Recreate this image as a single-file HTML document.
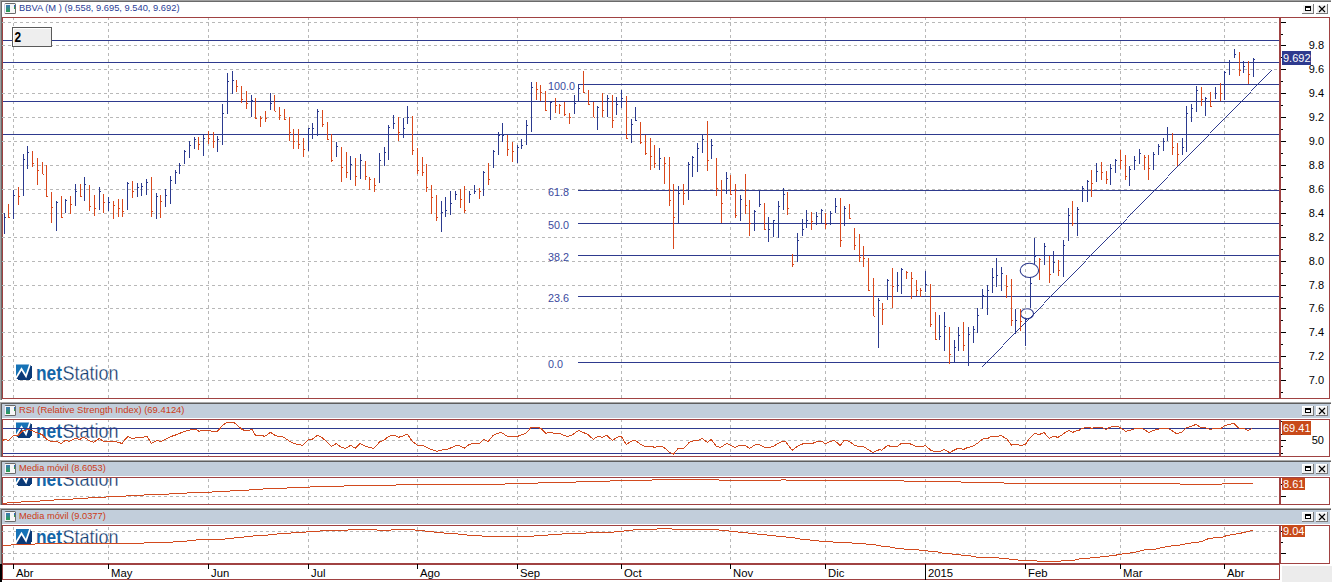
<!DOCTYPE html>
<html><head><meta charset="utf-8"><style>
html,body{margin:0;padding:0;background:#fff;width:1332px;height:582px;overflow:hidden}
svg{display:block;font-family:"Liberation Sans",sans-serif}
</style></head><body>
<svg width="1332" height="582" viewBox="0 0 1332 582" shape-rendering="crispEdges">
<defs>
<linearGradient id="ig" x1="0" y1="0" x2="0" y2="1"><stop offset="0" stop-color="#3a78b8"/><stop offset="1" stop-color="#2aa050"/></linearGradient>
<linearGradient id="lg" x1="0" y1="0" x2="0.6" y2="1"><stop offset="0" stop-color="#1a78c0"/><stop offset="0.55" stop-color="#0c4c8c"/><stop offset="1" stop-color="#0a2e68"/></linearGradient>
</defs>
<rect x="0" y="0" width="1332" height="582" fill="#ffffff" />
<rect x="0" y="0" width="1331" height="1" fill="#a0a0a0" />
<rect x="0" y="1" width="1331" height="1" fill="#6a6a6a" />
<rect x="0" y="0" width="1" height="400" fill="#a0a0a0" />
<rect x="1" y="1" width="1" height="399" fill="#6a6a6a" />
<rect x="4.5" y="3" width="11.5" height="11" fill="#6a6a6a" rx="1.5" shape-rendering="geometricPrecision"/>
<rect x="5" y="4" width="10" height="9" fill="#f6f6f6" />
<rect x="4" y="4" width="1" height="9" fill="#c8c8dc" />
<rect x="6" y="5" width="4" height="7" fill="url(#ig)"/>
<rect x="14" y="5" width="1" height="3" fill="#2a6ac0" />
<rect x="14" y="7" width="1" height="2" fill="#30a050" />
<text x="19" y="11.1" font-size="9.3" fill="#2a3c96" text-anchor="start" font-weight="normal" textLength="160.5" lengthAdjust="spacingAndGlyphs">BBVA (M ) (9.558, 9.695, 9.540, 9.692)</text>
<rect x="1302" y="4" width="12" height="10" fill="#7a7a7a" />
<rect x="1302" y="4" width="11" height="9" fill="#ffffff" />
<rect x="1303" y="5" width="10" height="8" fill="#f0f0f0" />
<rect x="1305" y="6" width="6" height="5" fill="#000" />
<rect x="1306" y="8" width="4" height="2" fill="#fff" />
<rect x="1316" y="4" width="12" height="10" fill="#7a7a7a" />
<rect x="1316" y="4" width="11" height="9" fill="#ffffff" />
<rect x="1317" y="5" width="10" height="8" fill="#f0f0f0" />
<path d="M1319 6L1325 12M1325 6L1319 12" stroke="#000" stroke-width="1.15" shape-rendering="geometricPrecision"/>
<rect x="2" y="17" width="1328" height="1" fill="#a04242" />
<rect x="2" y="398" width="1328" height="1" fill="#a04242" />
<rect x="2" y="17" width="1" height="382" fill="#a04242" />
<rect x="1329" y="17" width="1" height="382" fill="#a04242" />
<rect x="1279" y="17" width="2" height="382" fill="#a04242" />
<path d="M2 22h3M8 22h3M14 22h3M20 22h3M26 22h3M32 22h3M38 22h3M44 22h3M50 22h3M56 22h3M62 22h3M68 22h3M74 22h3M80 22h3M86 22h3M92 22h3M98 22h3M104 22h3M110 22h3M116 22h3M122 22h3M128 22h3M134 22h3M140 22h3M146 22h3M152 22h3M158 22h3M164 22h3M170 22h3M176 22h3M182 22h3M188 22h3M194 22h3M200 22h3M206 22h3M212 22h3M218 22h3M224 22h3M230 22h3M236 22h3M242 22h3M248 22h3M254 22h3M260 22h3M266 22h3M272 22h3M278 22h3M284 22h3M290 22h3M296 22h3M302 22h3M308 22h3M314 22h3M320 22h3M326 22h3M332 22h3M338 22h3M344 22h3M350 22h3M356 22h3M362 22h3M368 22h3M374 22h3M380 22h3M386 22h3M392 22h3M398 22h3M404 22h3M410 22h3M416 22h3M422 22h3M428 22h3M434 22h3M440 22h3M446 22h3M452 22h3M458 22h3M464 22h3M470 22h3M476 22h3M482 22h3M488 22h3M494 22h3M500 22h3M506 22h3M512 22h3M518 22h3M524 22h3M530 22h3M536 22h3M542 22h3M548 22h3M554 22h3M560 22h3M566 22h3M572 22h3M578 22h3M584 22h3M590 22h3M596 22h3M602 22h3M608 22h3M614 22h3M620 22h3M626 22h3M632 22h3M638 22h3M644 22h3M650 22h3M656 22h3M662 22h3M668 22h3M674 22h3M680 22h3M686 22h3M692 22h3M698 22h3M704 22h3M710 22h3M716 22h3M722 22h3M728 22h3M734 22h3M740 22h3M746 22h3M752 22h3M758 22h3M764 22h3M770 22h3M776 22h3M782 22h3M788 22h3M794 22h3M800 22h3M806 22h3M812 22h3M818 22h3M824 22h3M830 22h3M836 22h3M842 22h3M848 22h3M854 22h3M860 22h3M866 22h3M872 22h3M878 22h3M884 22h3M890 22h3M896 22h3M902 22h3M908 22h3M914 22h3M920 22h3M926 22h3M932 22h3M938 22h3M944 22h3M950 22h3M956 22h3M962 22h3M968 22h3M974 22h3M980 22h3M986 22h3M992 22h3M998 22h3M1004 22h3M1010 22h3M1016 22h3M1022 22h3M1028 22h3M1034 22h3M1040 22h3M1046 22h3M1052 22h3M1058 22h3M1064 22h3M1070 22h3M1076 22h3M1082 22h3M1088 22h3M1094 22h3M1100 22h3M1106 22h3M1112 22h3M1118 22h3M1124 22h3M1130 22h3M1136 22h3M1142 22h3M1148 22h3M1154 22h3M1160 22h3M1166 22h3M1172 22h3M1178 22h3M1184 22h3M1190 22h3M1196 22h3M1202 22h3M1208 22h3M1214 22h3M1220 22h3M1226 22h3M1232 22h3M1238 22h3M1244 22h3M1250 22h3M1256 22h3M1262 22h3M1268 22h3M1274 22h3" stroke="#b8b8b8" stroke-width="1" transform="translate(0,0.5)"/>
<path d="M2 45h3M8 45h3M14 45h3M20 45h3M26 45h3M32 45h3M38 45h3M44 45h3M50 45h3M56 45h3M62 45h3M68 45h3M74 45h3M80 45h3M86 45h3M92 45h3M98 45h3M104 45h3M110 45h3M116 45h3M122 45h3M128 45h3M134 45h3M140 45h3M146 45h3M152 45h3M158 45h3M164 45h3M170 45h3M176 45h3M182 45h3M188 45h3M194 45h3M200 45h3M206 45h3M212 45h3M218 45h3M224 45h3M230 45h3M236 45h3M242 45h3M248 45h3M254 45h3M260 45h3M266 45h3M272 45h3M278 45h3M284 45h3M290 45h3M296 45h3M302 45h3M308 45h3M314 45h3M320 45h3M326 45h3M332 45h3M338 45h3M344 45h3M350 45h3M356 45h3M362 45h3M368 45h3M374 45h3M380 45h3M386 45h3M392 45h3M398 45h3M404 45h3M410 45h3M416 45h3M422 45h3M428 45h3M434 45h3M440 45h3M446 45h3M452 45h3M458 45h3M464 45h3M470 45h3M476 45h3M482 45h3M488 45h3M494 45h3M500 45h3M506 45h3M512 45h3M518 45h3M524 45h3M530 45h3M536 45h3M542 45h3M548 45h3M554 45h3M560 45h3M566 45h3M572 45h3M578 45h3M584 45h3M590 45h3M596 45h3M602 45h3M608 45h3M614 45h3M620 45h3M626 45h3M632 45h3M638 45h3M644 45h3M650 45h3M656 45h3M662 45h3M668 45h3M674 45h3M680 45h3M686 45h3M692 45h3M698 45h3M704 45h3M710 45h3M716 45h3M722 45h3M728 45h3M734 45h3M740 45h3M746 45h3M752 45h3M758 45h3M764 45h3M770 45h3M776 45h3M782 45h3M788 45h3M794 45h3M800 45h3M806 45h3M812 45h3M818 45h3M824 45h3M830 45h3M836 45h3M842 45h3M848 45h3M854 45h3M860 45h3M866 45h3M872 45h3M878 45h3M884 45h3M890 45h3M896 45h3M902 45h3M908 45h3M914 45h3M920 45h3M926 45h3M932 45h3M938 45h3M944 45h3M950 45h3M956 45h3M962 45h3M968 45h3M974 45h3M980 45h3M986 45h3M992 45h3M998 45h3M1004 45h3M1010 45h3M1016 45h3M1022 45h3M1028 45h3M1034 45h3M1040 45h3M1046 45h3M1052 45h3M1058 45h3M1064 45h3M1070 45h3M1076 45h3M1082 45h3M1088 45h3M1094 45h3M1100 45h3M1106 45h3M1112 45h3M1118 45h3M1124 45h3M1130 45h3M1136 45h3M1142 45h3M1148 45h3M1154 45h3M1160 45h3M1166 45h3M1172 45h3M1178 45h3M1184 45h3M1190 45h3M1196 45h3M1202 45h3M1208 45h3M1214 45h3M1220 45h3M1226 45h3M1232 45h3M1238 45h3M1244 45h3M1250 45h3M1256 45h3M1262 45h3M1268 45h3M1274 45h3" stroke="#b8b8b8" stroke-width="1" transform="translate(0,0.5)"/>
<path d="M2 69h3M8 69h3M14 69h3M20 69h3M26 69h3M32 69h3M38 69h3M44 69h3M50 69h3M56 69h3M62 69h3M68 69h3M74 69h3M80 69h3M86 69h3M92 69h3M98 69h3M104 69h3M110 69h3M116 69h3M122 69h3M128 69h3M134 69h3M140 69h3M146 69h3M152 69h3M158 69h3M164 69h3M170 69h3M176 69h3M182 69h3M188 69h3M194 69h3M200 69h3M206 69h3M212 69h3M218 69h3M224 69h3M230 69h3M236 69h3M242 69h3M248 69h3M254 69h3M260 69h3M266 69h3M272 69h3M278 69h3M284 69h3M290 69h3M296 69h3M302 69h3M308 69h3M314 69h3M320 69h3M326 69h3M332 69h3M338 69h3M344 69h3M350 69h3M356 69h3M362 69h3M368 69h3M374 69h3M380 69h3M386 69h3M392 69h3M398 69h3M404 69h3M410 69h3M416 69h3M422 69h3M428 69h3M434 69h3M440 69h3M446 69h3M452 69h3M458 69h3M464 69h3M470 69h3M476 69h3M482 69h3M488 69h3M494 69h3M500 69h3M506 69h3M512 69h3M518 69h3M524 69h3M530 69h3M536 69h3M542 69h3M548 69h3M554 69h3M560 69h3M566 69h3M572 69h3M578 69h3M584 69h3M590 69h3M596 69h3M602 69h3M608 69h3M614 69h3M620 69h3M626 69h3M632 69h3M638 69h3M644 69h3M650 69h3M656 69h3M662 69h3M668 69h3M674 69h3M680 69h3M686 69h3M692 69h3M698 69h3M704 69h3M710 69h3M716 69h3M722 69h3M728 69h3M734 69h3M740 69h3M746 69h3M752 69h3M758 69h3M764 69h3M770 69h3M776 69h3M782 69h3M788 69h3M794 69h3M800 69h3M806 69h3M812 69h3M818 69h3M824 69h3M830 69h3M836 69h3M842 69h3M848 69h3M854 69h3M860 69h3M866 69h3M872 69h3M878 69h3M884 69h3M890 69h3M896 69h3M902 69h3M908 69h3M914 69h3M920 69h3M926 69h3M932 69h3M938 69h3M944 69h3M950 69h3M956 69h3M962 69h3M968 69h3M974 69h3M980 69h3M986 69h3M992 69h3M998 69h3M1004 69h3M1010 69h3M1016 69h3M1022 69h3M1028 69h3M1034 69h3M1040 69h3M1046 69h3M1052 69h3M1058 69h3M1064 69h3M1070 69h3M1076 69h3M1082 69h3M1088 69h3M1094 69h3M1100 69h3M1106 69h3M1112 69h3M1118 69h3M1124 69h3M1130 69h3M1136 69h3M1142 69h3M1148 69h3M1154 69h3M1160 69h3M1166 69h3M1172 69h3M1178 69h3M1184 69h3M1190 69h3M1196 69h3M1202 69h3M1208 69h3M1214 69h3M1220 69h3M1226 69h3M1232 69h3M1238 69h3M1244 69h3M1250 69h3M1256 69h3M1262 69h3M1268 69h3M1274 69h3" stroke="#b8b8b8" stroke-width="1" transform="translate(0,0.5)"/>
<path d="M2 93h3M8 93h3M14 93h3M20 93h3M26 93h3M32 93h3M38 93h3M44 93h3M50 93h3M56 93h3M62 93h3M68 93h3M74 93h3M80 93h3M86 93h3M92 93h3M98 93h3M104 93h3M110 93h3M116 93h3M122 93h3M128 93h3M134 93h3M140 93h3M146 93h3M152 93h3M158 93h3M164 93h3M170 93h3M176 93h3M182 93h3M188 93h3M194 93h3M200 93h3M206 93h3M212 93h3M218 93h3M224 93h3M230 93h3M236 93h3M242 93h3M248 93h3M254 93h3M260 93h3M266 93h3M272 93h3M278 93h3M284 93h3M290 93h3M296 93h3M302 93h3M308 93h3M314 93h3M320 93h3M326 93h3M332 93h3M338 93h3M344 93h3M350 93h3M356 93h3M362 93h3M368 93h3M374 93h3M380 93h3M386 93h3M392 93h3M398 93h3M404 93h3M410 93h3M416 93h3M422 93h3M428 93h3M434 93h3M440 93h3M446 93h3M452 93h3M458 93h3M464 93h3M470 93h3M476 93h3M482 93h3M488 93h3M494 93h3M500 93h3M506 93h3M512 93h3M518 93h3M524 93h3M530 93h3M536 93h3M542 93h3M548 93h3M554 93h3M560 93h3M566 93h3M572 93h3M578 93h3M584 93h3M590 93h3M596 93h3M602 93h3M608 93h3M614 93h3M620 93h3M626 93h3M632 93h3M638 93h3M644 93h3M650 93h3M656 93h3M662 93h3M668 93h3M674 93h3M680 93h3M686 93h3M692 93h3M698 93h3M704 93h3M710 93h3M716 93h3M722 93h3M728 93h3M734 93h3M740 93h3M746 93h3M752 93h3M758 93h3M764 93h3M770 93h3M776 93h3M782 93h3M788 93h3M794 93h3M800 93h3M806 93h3M812 93h3M818 93h3M824 93h3M830 93h3M836 93h3M842 93h3M848 93h3M854 93h3M860 93h3M866 93h3M872 93h3M878 93h3M884 93h3M890 93h3M896 93h3M902 93h3M908 93h3M914 93h3M920 93h3M926 93h3M932 93h3M938 93h3M944 93h3M950 93h3M956 93h3M962 93h3M968 93h3M974 93h3M980 93h3M986 93h3M992 93h3M998 93h3M1004 93h3M1010 93h3M1016 93h3M1022 93h3M1028 93h3M1034 93h3M1040 93h3M1046 93h3M1052 93h3M1058 93h3M1064 93h3M1070 93h3M1076 93h3M1082 93h3M1088 93h3M1094 93h3M1100 93h3M1106 93h3M1112 93h3M1118 93h3M1124 93h3M1130 93h3M1136 93h3M1142 93h3M1148 93h3M1154 93h3M1160 93h3M1166 93h3M1172 93h3M1178 93h3M1184 93h3M1190 93h3M1196 93h3M1202 93h3M1208 93h3M1214 93h3M1220 93h3M1226 93h3M1232 93h3M1238 93h3M1244 93h3M1250 93h3M1256 93h3M1262 93h3M1268 93h3M1274 93h3" stroke="#b8b8b8" stroke-width="1" transform="translate(0,0.5)"/>
<path d="M2 117h3M8 117h3M14 117h3M20 117h3M26 117h3M32 117h3M38 117h3M44 117h3M50 117h3M56 117h3M62 117h3M68 117h3M74 117h3M80 117h3M86 117h3M92 117h3M98 117h3M104 117h3M110 117h3M116 117h3M122 117h3M128 117h3M134 117h3M140 117h3M146 117h3M152 117h3M158 117h3M164 117h3M170 117h3M176 117h3M182 117h3M188 117h3M194 117h3M200 117h3M206 117h3M212 117h3M218 117h3M224 117h3M230 117h3M236 117h3M242 117h3M248 117h3M254 117h3M260 117h3M266 117h3M272 117h3M278 117h3M284 117h3M290 117h3M296 117h3M302 117h3M308 117h3M314 117h3M320 117h3M326 117h3M332 117h3M338 117h3M344 117h3M350 117h3M356 117h3M362 117h3M368 117h3M374 117h3M380 117h3M386 117h3M392 117h3M398 117h3M404 117h3M410 117h3M416 117h3M422 117h3M428 117h3M434 117h3M440 117h3M446 117h3M452 117h3M458 117h3M464 117h3M470 117h3M476 117h3M482 117h3M488 117h3M494 117h3M500 117h3M506 117h3M512 117h3M518 117h3M524 117h3M530 117h3M536 117h3M542 117h3M548 117h3M554 117h3M560 117h3M566 117h3M572 117h3M578 117h3M584 117h3M590 117h3M596 117h3M602 117h3M608 117h3M614 117h3M620 117h3M626 117h3M632 117h3M638 117h3M644 117h3M650 117h3M656 117h3M662 117h3M668 117h3M674 117h3M680 117h3M686 117h3M692 117h3M698 117h3M704 117h3M710 117h3M716 117h3M722 117h3M728 117h3M734 117h3M740 117h3M746 117h3M752 117h3M758 117h3M764 117h3M770 117h3M776 117h3M782 117h3M788 117h3M794 117h3M800 117h3M806 117h3M812 117h3M818 117h3M824 117h3M830 117h3M836 117h3M842 117h3M848 117h3M854 117h3M860 117h3M866 117h3M872 117h3M878 117h3M884 117h3M890 117h3M896 117h3M902 117h3M908 117h3M914 117h3M920 117h3M926 117h3M932 117h3M938 117h3M944 117h3M950 117h3M956 117h3M962 117h3M968 117h3M974 117h3M980 117h3M986 117h3M992 117h3M998 117h3M1004 117h3M1010 117h3M1016 117h3M1022 117h3M1028 117h3M1034 117h3M1040 117h3M1046 117h3M1052 117h3M1058 117h3M1064 117h3M1070 117h3M1076 117h3M1082 117h3M1088 117h3M1094 117h3M1100 117h3M1106 117h3M1112 117h3M1118 117h3M1124 117h3M1130 117h3M1136 117h3M1142 117h3M1148 117h3M1154 117h3M1160 117h3M1166 117h3M1172 117h3M1178 117h3M1184 117h3M1190 117h3M1196 117h3M1202 117h3M1208 117h3M1214 117h3M1220 117h3M1226 117h3M1232 117h3M1238 117h3M1244 117h3M1250 117h3M1256 117h3M1262 117h3M1268 117h3M1274 117h3" stroke="#b8b8b8" stroke-width="1" transform="translate(0,0.5)"/>
<path d="M2 141h3M8 141h3M14 141h3M20 141h3M26 141h3M32 141h3M38 141h3M44 141h3M50 141h3M56 141h3M62 141h3M68 141h3M74 141h3M80 141h3M86 141h3M92 141h3M98 141h3M104 141h3M110 141h3M116 141h3M122 141h3M128 141h3M134 141h3M140 141h3M146 141h3M152 141h3M158 141h3M164 141h3M170 141h3M176 141h3M182 141h3M188 141h3M194 141h3M200 141h3M206 141h3M212 141h3M218 141h3M224 141h3M230 141h3M236 141h3M242 141h3M248 141h3M254 141h3M260 141h3M266 141h3M272 141h3M278 141h3M284 141h3M290 141h3M296 141h3M302 141h3M308 141h3M314 141h3M320 141h3M326 141h3M332 141h3M338 141h3M344 141h3M350 141h3M356 141h3M362 141h3M368 141h3M374 141h3M380 141h3M386 141h3M392 141h3M398 141h3M404 141h3M410 141h3M416 141h3M422 141h3M428 141h3M434 141h3M440 141h3M446 141h3M452 141h3M458 141h3M464 141h3M470 141h3M476 141h3M482 141h3M488 141h3M494 141h3M500 141h3M506 141h3M512 141h3M518 141h3M524 141h3M530 141h3M536 141h3M542 141h3M548 141h3M554 141h3M560 141h3M566 141h3M572 141h3M578 141h3M584 141h3M590 141h3M596 141h3M602 141h3M608 141h3M614 141h3M620 141h3M626 141h3M632 141h3M638 141h3M644 141h3M650 141h3M656 141h3M662 141h3M668 141h3M674 141h3M680 141h3M686 141h3M692 141h3M698 141h3M704 141h3M710 141h3M716 141h3M722 141h3M728 141h3M734 141h3M740 141h3M746 141h3M752 141h3M758 141h3M764 141h3M770 141h3M776 141h3M782 141h3M788 141h3M794 141h3M800 141h3M806 141h3M812 141h3M818 141h3M824 141h3M830 141h3M836 141h3M842 141h3M848 141h3M854 141h3M860 141h3M866 141h3M872 141h3M878 141h3M884 141h3M890 141h3M896 141h3M902 141h3M908 141h3M914 141h3M920 141h3M926 141h3M932 141h3M938 141h3M944 141h3M950 141h3M956 141h3M962 141h3M968 141h3M974 141h3M980 141h3M986 141h3M992 141h3M998 141h3M1004 141h3M1010 141h3M1016 141h3M1022 141h3M1028 141h3M1034 141h3M1040 141h3M1046 141h3M1052 141h3M1058 141h3M1064 141h3M1070 141h3M1076 141h3M1082 141h3M1088 141h3M1094 141h3M1100 141h3M1106 141h3M1112 141h3M1118 141h3M1124 141h3M1130 141h3M1136 141h3M1142 141h3M1148 141h3M1154 141h3M1160 141h3M1166 141h3M1172 141h3M1178 141h3M1184 141h3M1190 141h3M1196 141h3M1202 141h3M1208 141h3M1214 141h3M1220 141h3M1226 141h3M1232 141h3M1238 141h3M1244 141h3M1250 141h3M1256 141h3M1262 141h3M1268 141h3M1274 141h3" stroke="#b8b8b8" stroke-width="1" transform="translate(0,0.5)"/>
<path d="M2 165h3M8 165h3M14 165h3M20 165h3M26 165h3M32 165h3M38 165h3M44 165h3M50 165h3M56 165h3M62 165h3M68 165h3M74 165h3M80 165h3M86 165h3M92 165h3M98 165h3M104 165h3M110 165h3M116 165h3M122 165h3M128 165h3M134 165h3M140 165h3M146 165h3M152 165h3M158 165h3M164 165h3M170 165h3M176 165h3M182 165h3M188 165h3M194 165h3M200 165h3M206 165h3M212 165h3M218 165h3M224 165h3M230 165h3M236 165h3M242 165h3M248 165h3M254 165h3M260 165h3M266 165h3M272 165h3M278 165h3M284 165h3M290 165h3M296 165h3M302 165h3M308 165h3M314 165h3M320 165h3M326 165h3M332 165h3M338 165h3M344 165h3M350 165h3M356 165h3M362 165h3M368 165h3M374 165h3M380 165h3M386 165h3M392 165h3M398 165h3M404 165h3M410 165h3M416 165h3M422 165h3M428 165h3M434 165h3M440 165h3M446 165h3M452 165h3M458 165h3M464 165h3M470 165h3M476 165h3M482 165h3M488 165h3M494 165h3M500 165h3M506 165h3M512 165h3M518 165h3M524 165h3M530 165h3M536 165h3M542 165h3M548 165h3M554 165h3M560 165h3M566 165h3M572 165h3M578 165h3M584 165h3M590 165h3M596 165h3M602 165h3M608 165h3M614 165h3M620 165h3M626 165h3M632 165h3M638 165h3M644 165h3M650 165h3M656 165h3M662 165h3M668 165h3M674 165h3M680 165h3M686 165h3M692 165h3M698 165h3M704 165h3M710 165h3M716 165h3M722 165h3M728 165h3M734 165h3M740 165h3M746 165h3M752 165h3M758 165h3M764 165h3M770 165h3M776 165h3M782 165h3M788 165h3M794 165h3M800 165h3M806 165h3M812 165h3M818 165h3M824 165h3M830 165h3M836 165h3M842 165h3M848 165h3M854 165h3M860 165h3M866 165h3M872 165h3M878 165h3M884 165h3M890 165h3M896 165h3M902 165h3M908 165h3M914 165h3M920 165h3M926 165h3M932 165h3M938 165h3M944 165h3M950 165h3M956 165h3M962 165h3M968 165h3M974 165h3M980 165h3M986 165h3M992 165h3M998 165h3M1004 165h3M1010 165h3M1016 165h3M1022 165h3M1028 165h3M1034 165h3M1040 165h3M1046 165h3M1052 165h3M1058 165h3M1064 165h3M1070 165h3M1076 165h3M1082 165h3M1088 165h3M1094 165h3M1100 165h3M1106 165h3M1112 165h3M1118 165h3M1124 165h3M1130 165h3M1136 165h3M1142 165h3M1148 165h3M1154 165h3M1160 165h3M1166 165h3M1172 165h3M1178 165h3M1184 165h3M1190 165h3M1196 165h3M1202 165h3M1208 165h3M1214 165h3M1220 165h3M1226 165h3M1232 165h3M1238 165h3M1244 165h3M1250 165h3M1256 165h3M1262 165h3M1268 165h3M1274 165h3" stroke="#b8b8b8" stroke-width="1" transform="translate(0,0.5)"/>
<path d="M2 189h3M8 189h3M14 189h3M20 189h3M26 189h3M32 189h3M38 189h3M44 189h3M50 189h3M56 189h3M62 189h3M68 189h3M74 189h3M80 189h3M86 189h3M92 189h3M98 189h3M104 189h3M110 189h3M116 189h3M122 189h3M128 189h3M134 189h3M140 189h3M146 189h3M152 189h3M158 189h3M164 189h3M170 189h3M176 189h3M182 189h3M188 189h3M194 189h3M200 189h3M206 189h3M212 189h3M218 189h3M224 189h3M230 189h3M236 189h3M242 189h3M248 189h3M254 189h3M260 189h3M266 189h3M272 189h3M278 189h3M284 189h3M290 189h3M296 189h3M302 189h3M308 189h3M314 189h3M320 189h3M326 189h3M332 189h3M338 189h3M344 189h3M350 189h3M356 189h3M362 189h3M368 189h3M374 189h3M380 189h3M386 189h3M392 189h3M398 189h3M404 189h3M410 189h3M416 189h3M422 189h3M428 189h3M434 189h3M440 189h3M446 189h3M452 189h3M458 189h3M464 189h3M470 189h3M476 189h3M482 189h3M488 189h3M494 189h3M500 189h3M506 189h3M512 189h3M518 189h3M524 189h3M530 189h3M536 189h3M542 189h3M548 189h3M554 189h3M560 189h3M566 189h3M572 189h3M578 189h3M584 189h3M590 189h3M596 189h3M602 189h3M608 189h3M614 189h3M620 189h3M626 189h3M632 189h3M638 189h3M644 189h3M650 189h3M656 189h3M662 189h3M668 189h3M674 189h3M680 189h3M686 189h3M692 189h3M698 189h3M704 189h3M710 189h3M716 189h3M722 189h3M728 189h3M734 189h3M740 189h3M746 189h3M752 189h3M758 189h3M764 189h3M770 189h3M776 189h3M782 189h3M788 189h3M794 189h3M800 189h3M806 189h3M812 189h3M818 189h3M824 189h3M830 189h3M836 189h3M842 189h3M848 189h3M854 189h3M860 189h3M866 189h3M872 189h3M878 189h3M884 189h3M890 189h3M896 189h3M902 189h3M908 189h3M914 189h3M920 189h3M926 189h3M932 189h3M938 189h3M944 189h3M950 189h3M956 189h3M962 189h3M968 189h3M974 189h3M980 189h3M986 189h3M992 189h3M998 189h3M1004 189h3M1010 189h3M1016 189h3M1022 189h3M1028 189h3M1034 189h3M1040 189h3M1046 189h3M1052 189h3M1058 189h3M1064 189h3M1070 189h3M1076 189h3M1082 189h3M1088 189h3M1094 189h3M1100 189h3M1106 189h3M1112 189h3M1118 189h3M1124 189h3M1130 189h3M1136 189h3M1142 189h3M1148 189h3M1154 189h3M1160 189h3M1166 189h3M1172 189h3M1178 189h3M1184 189h3M1190 189h3M1196 189h3M1202 189h3M1208 189h3M1214 189h3M1220 189h3M1226 189h3M1232 189h3M1238 189h3M1244 189h3M1250 189h3M1256 189h3M1262 189h3M1268 189h3M1274 189h3" stroke="#b8b8b8" stroke-width="1" transform="translate(0,0.5)"/>
<path d="M2 213h3M8 213h3M14 213h3M20 213h3M26 213h3M32 213h3M38 213h3M44 213h3M50 213h3M56 213h3M62 213h3M68 213h3M74 213h3M80 213h3M86 213h3M92 213h3M98 213h3M104 213h3M110 213h3M116 213h3M122 213h3M128 213h3M134 213h3M140 213h3M146 213h3M152 213h3M158 213h3M164 213h3M170 213h3M176 213h3M182 213h3M188 213h3M194 213h3M200 213h3M206 213h3M212 213h3M218 213h3M224 213h3M230 213h3M236 213h3M242 213h3M248 213h3M254 213h3M260 213h3M266 213h3M272 213h3M278 213h3M284 213h3M290 213h3M296 213h3M302 213h3M308 213h3M314 213h3M320 213h3M326 213h3M332 213h3M338 213h3M344 213h3M350 213h3M356 213h3M362 213h3M368 213h3M374 213h3M380 213h3M386 213h3M392 213h3M398 213h3M404 213h3M410 213h3M416 213h3M422 213h3M428 213h3M434 213h3M440 213h3M446 213h3M452 213h3M458 213h3M464 213h3M470 213h3M476 213h3M482 213h3M488 213h3M494 213h3M500 213h3M506 213h3M512 213h3M518 213h3M524 213h3M530 213h3M536 213h3M542 213h3M548 213h3M554 213h3M560 213h3M566 213h3M572 213h3M578 213h3M584 213h3M590 213h3M596 213h3M602 213h3M608 213h3M614 213h3M620 213h3M626 213h3M632 213h3M638 213h3M644 213h3M650 213h3M656 213h3M662 213h3M668 213h3M674 213h3M680 213h3M686 213h3M692 213h3M698 213h3M704 213h3M710 213h3M716 213h3M722 213h3M728 213h3M734 213h3M740 213h3M746 213h3M752 213h3M758 213h3M764 213h3M770 213h3M776 213h3M782 213h3M788 213h3M794 213h3M800 213h3M806 213h3M812 213h3M818 213h3M824 213h3M830 213h3M836 213h3M842 213h3M848 213h3M854 213h3M860 213h3M866 213h3M872 213h3M878 213h3M884 213h3M890 213h3M896 213h3M902 213h3M908 213h3M914 213h3M920 213h3M926 213h3M932 213h3M938 213h3M944 213h3M950 213h3M956 213h3M962 213h3M968 213h3M974 213h3M980 213h3M986 213h3M992 213h3M998 213h3M1004 213h3M1010 213h3M1016 213h3M1022 213h3M1028 213h3M1034 213h3M1040 213h3M1046 213h3M1052 213h3M1058 213h3M1064 213h3M1070 213h3M1076 213h3M1082 213h3M1088 213h3M1094 213h3M1100 213h3M1106 213h3M1112 213h3M1118 213h3M1124 213h3M1130 213h3M1136 213h3M1142 213h3M1148 213h3M1154 213h3M1160 213h3M1166 213h3M1172 213h3M1178 213h3M1184 213h3M1190 213h3M1196 213h3M1202 213h3M1208 213h3M1214 213h3M1220 213h3M1226 213h3M1232 213h3M1238 213h3M1244 213h3M1250 213h3M1256 213h3M1262 213h3M1268 213h3M1274 213h3" stroke="#b8b8b8" stroke-width="1" transform="translate(0,0.5)"/>
<path d="M2 237h3M8 237h3M14 237h3M20 237h3M26 237h3M32 237h3M38 237h3M44 237h3M50 237h3M56 237h3M62 237h3M68 237h3M74 237h3M80 237h3M86 237h3M92 237h3M98 237h3M104 237h3M110 237h3M116 237h3M122 237h3M128 237h3M134 237h3M140 237h3M146 237h3M152 237h3M158 237h3M164 237h3M170 237h3M176 237h3M182 237h3M188 237h3M194 237h3M200 237h3M206 237h3M212 237h3M218 237h3M224 237h3M230 237h3M236 237h3M242 237h3M248 237h3M254 237h3M260 237h3M266 237h3M272 237h3M278 237h3M284 237h3M290 237h3M296 237h3M302 237h3M308 237h3M314 237h3M320 237h3M326 237h3M332 237h3M338 237h3M344 237h3M350 237h3M356 237h3M362 237h3M368 237h3M374 237h3M380 237h3M386 237h3M392 237h3M398 237h3M404 237h3M410 237h3M416 237h3M422 237h3M428 237h3M434 237h3M440 237h3M446 237h3M452 237h3M458 237h3M464 237h3M470 237h3M476 237h3M482 237h3M488 237h3M494 237h3M500 237h3M506 237h3M512 237h3M518 237h3M524 237h3M530 237h3M536 237h3M542 237h3M548 237h3M554 237h3M560 237h3M566 237h3M572 237h3M578 237h3M584 237h3M590 237h3M596 237h3M602 237h3M608 237h3M614 237h3M620 237h3M626 237h3M632 237h3M638 237h3M644 237h3M650 237h3M656 237h3M662 237h3M668 237h3M674 237h3M680 237h3M686 237h3M692 237h3M698 237h3M704 237h3M710 237h3M716 237h3M722 237h3M728 237h3M734 237h3M740 237h3M746 237h3M752 237h3M758 237h3M764 237h3M770 237h3M776 237h3M782 237h3M788 237h3M794 237h3M800 237h3M806 237h3M812 237h3M818 237h3M824 237h3M830 237h3M836 237h3M842 237h3M848 237h3M854 237h3M860 237h3M866 237h3M872 237h3M878 237h3M884 237h3M890 237h3M896 237h3M902 237h3M908 237h3M914 237h3M920 237h3M926 237h3M932 237h3M938 237h3M944 237h3M950 237h3M956 237h3M962 237h3M968 237h3M974 237h3M980 237h3M986 237h3M992 237h3M998 237h3M1004 237h3M1010 237h3M1016 237h3M1022 237h3M1028 237h3M1034 237h3M1040 237h3M1046 237h3M1052 237h3M1058 237h3M1064 237h3M1070 237h3M1076 237h3M1082 237h3M1088 237h3M1094 237h3M1100 237h3M1106 237h3M1112 237h3M1118 237h3M1124 237h3M1130 237h3M1136 237h3M1142 237h3M1148 237h3M1154 237h3M1160 237h3M1166 237h3M1172 237h3M1178 237h3M1184 237h3M1190 237h3M1196 237h3M1202 237h3M1208 237h3M1214 237h3M1220 237h3M1226 237h3M1232 237h3M1238 237h3M1244 237h3M1250 237h3M1256 237h3M1262 237h3M1268 237h3M1274 237h3" stroke="#b8b8b8" stroke-width="1" transform="translate(0,0.5)"/>
<path d="M2 261h3M8 261h3M14 261h3M20 261h3M26 261h3M32 261h3M38 261h3M44 261h3M50 261h3M56 261h3M62 261h3M68 261h3M74 261h3M80 261h3M86 261h3M92 261h3M98 261h3M104 261h3M110 261h3M116 261h3M122 261h3M128 261h3M134 261h3M140 261h3M146 261h3M152 261h3M158 261h3M164 261h3M170 261h3M176 261h3M182 261h3M188 261h3M194 261h3M200 261h3M206 261h3M212 261h3M218 261h3M224 261h3M230 261h3M236 261h3M242 261h3M248 261h3M254 261h3M260 261h3M266 261h3M272 261h3M278 261h3M284 261h3M290 261h3M296 261h3M302 261h3M308 261h3M314 261h3M320 261h3M326 261h3M332 261h3M338 261h3M344 261h3M350 261h3M356 261h3M362 261h3M368 261h3M374 261h3M380 261h3M386 261h3M392 261h3M398 261h3M404 261h3M410 261h3M416 261h3M422 261h3M428 261h3M434 261h3M440 261h3M446 261h3M452 261h3M458 261h3M464 261h3M470 261h3M476 261h3M482 261h3M488 261h3M494 261h3M500 261h3M506 261h3M512 261h3M518 261h3M524 261h3M530 261h3M536 261h3M542 261h3M548 261h3M554 261h3M560 261h3M566 261h3M572 261h3M578 261h3M584 261h3M590 261h3M596 261h3M602 261h3M608 261h3M614 261h3M620 261h3M626 261h3M632 261h3M638 261h3M644 261h3M650 261h3M656 261h3M662 261h3M668 261h3M674 261h3M680 261h3M686 261h3M692 261h3M698 261h3M704 261h3M710 261h3M716 261h3M722 261h3M728 261h3M734 261h3M740 261h3M746 261h3M752 261h3M758 261h3M764 261h3M770 261h3M776 261h3M782 261h3M788 261h3M794 261h3M800 261h3M806 261h3M812 261h3M818 261h3M824 261h3M830 261h3M836 261h3M842 261h3M848 261h3M854 261h3M860 261h3M866 261h3M872 261h3M878 261h3M884 261h3M890 261h3M896 261h3M902 261h3M908 261h3M914 261h3M920 261h3M926 261h3M932 261h3M938 261h3M944 261h3M950 261h3M956 261h3M962 261h3M968 261h3M974 261h3M980 261h3M986 261h3M992 261h3M998 261h3M1004 261h3M1010 261h3M1016 261h3M1022 261h3M1028 261h3M1034 261h3M1040 261h3M1046 261h3M1052 261h3M1058 261h3M1064 261h3M1070 261h3M1076 261h3M1082 261h3M1088 261h3M1094 261h3M1100 261h3M1106 261h3M1112 261h3M1118 261h3M1124 261h3M1130 261h3M1136 261h3M1142 261h3M1148 261h3M1154 261h3M1160 261h3M1166 261h3M1172 261h3M1178 261h3M1184 261h3M1190 261h3M1196 261h3M1202 261h3M1208 261h3M1214 261h3M1220 261h3M1226 261h3M1232 261h3M1238 261h3M1244 261h3M1250 261h3M1256 261h3M1262 261h3M1268 261h3M1274 261h3" stroke="#b8b8b8" stroke-width="1" transform="translate(0,0.5)"/>
<path d="M2 285h3M8 285h3M14 285h3M20 285h3M26 285h3M32 285h3M38 285h3M44 285h3M50 285h3M56 285h3M62 285h3M68 285h3M74 285h3M80 285h3M86 285h3M92 285h3M98 285h3M104 285h3M110 285h3M116 285h3M122 285h3M128 285h3M134 285h3M140 285h3M146 285h3M152 285h3M158 285h3M164 285h3M170 285h3M176 285h3M182 285h3M188 285h3M194 285h3M200 285h3M206 285h3M212 285h3M218 285h3M224 285h3M230 285h3M236 285h3M242 285h3M248 285h3M254 285h3M260 285h3M266 285h3M272 285h3M278 285h3M284 285h3M290 285h3M296 285h3M302 285h3M308 285h3M314 285h3M320 285h3M326 285h3M332 285h3M338 285h3M344 285h3M350 285h3M356 285h3M362 285h3M368 285h3M374 285h3M380 285h3M386 285h3M392 285h3M398 285h3M404 285h3M410 285h3M416 285h3M422 285h3M428 285h3M434 285h3M440 285h3M446 285h3M452 285h3M458 285h3M464 285h3M470 285h3M476 285h3M482 285h3M488 285h3M494 285h3M500 285h3M506 285h3M512 285h3M518 285h3M524 285h3M530 285h3M536 285h3M542 285h3M548 285h3M554 285h3M560 285h3M566 285h3M572 285h3M578 285h3M584 285h3M590 285h3M596 285h3M602 285h3M608 285h3M614 285h3M620 285h3M626 285h3M632 285h3M638 285h3M644 285h3M650 285h3M656 285h3M662 285h3M668 285h3M674 285h3M680 285h3M686 285h3M692 285h3M698 285h3M704 285h3M710 285h3M716 285h3M722 285h3M728 285h3M734 285h3M740 285h3M746 285h3M752 285h3M758 285h3M764 285h3M770 285h3M776 285h3M782 285h3M788 285h3M794 285h3M800 285h3M806 285h3M812 285h3M818 285h3M824 285h3M830 285h3M836 285h3M842 285h3M848 285h3M854 285h3M860 285h3M866 285h3M872 285h3M878 285h3M884 285h3M890 285h3M896 285h3M902 285h3M908 285h3M914 285h3M920 285h3M926 285h3M932 285h3M938 285h3M944 285h3M950 285h3M956 285h3M962 285h3M968 285h3M974 285h3M980 285h3M986 285h3M992 285h3M998 285h3M1004 285h3M1010 285h3M1016 285h3M1022 285h3M1028 285h3M1034 285h3M1040 285h3M1046 285h3M1052 285h3M1058 285h3M1064 285h3M1070 285h3M1076 285h3M1082 285h3M1088 285h3M1094 285h3M1100 285h3M1106 285h3M1112 285h3M1118 285h3M1124 285h3M1130 285h3M1136 285h3M1142 285h3M1148 285h3M1154 285h3M1160 285h3M1166 285h3M1172 285h3M1178 285h3M1184 285h3M1190 285h3M1196 285h3M1202 285h3M1208 285h3M1214 285h3M1220 285h3M1226 285h3M1232 285h3M1238 285h3M1244 285h3M1250 285h3M1256 285h3M1262 285h3M1268 285h3M1274 285h3" stroke="#b8b8b8" stroke-width="1" transform="translate(0,0.5)"/>
<path d="M2 308h3M8 308h3M14 308h3M20 308h3M26 308h3M32 308h3M38 308h3M44 308h3M50 308h3M56 308h3M62 308h3M68 308h3M74 308h3M80 308h3M86 308h3M92 308h3M98 308h3M104 308h3M110 308h3M116 308h3M122 308h3M128 308h3M134 308h3M140 308h3M146 308h3M152 308h3M158 308h3M164 308h3M170 308h3M176 308h3M182 308h3M188 308h3M194 308h3M200 308h3M206 308h3M212 308h3M218 308h3M224 308h3M230 308h3M236 308h3M242 308h3M248 308h3M254 308h3M260 308h3M266 308h3M272 308h3M278 308h3M284 308h3M290 308h3M296 308h3M302 308h3M308 308h3M314 308h3M320 308h3M326 308h3M332 308h3M338 308h3M344 308h3M350 308h3M356 308h3M362 308h3M368 308h3M374 308h3M380 308h3M386 308h3M392 308h3M398 308h3M404 308h3M410 308h3M416 308h3M422 308h3M428 308h3M434 308h3M440 308h3M446 308h3M452 308h3M458 308h3M464 308h3M470 308h3M476 308h3M482 308h3M488 308h3M494 308h3M500 308h3M506 308h3M512 308h3M518 308h3M524 308h3M530 308h3M536 308h3M542 308h3M548 308h3M554 308h3M560 308h3M566 308h3M572 308h3M578 308h3M584 308h3M590 308h3M596 308h3M602 308h3M608 308h3M614 308h3M620 308h3M626 308h3M632 308h3M638 308h3M644 308h3M650 308h3M656 308h3M662 308h3M668 308h3M674 308h3M680 308h3M686 308h3M692 308h3M698 308h3M704 308h3M710 308h3M716 308h3M722 308h3M728 308h3M734 308h3M740 308h3M746 308h3M752 308h3M758 308h3M764 308h3M770 308h3M776 308h3M782 308h3M788 308h3M794 308h3M800 308h3M806 308h3M812 308h3M818 308h3M824 308h3M830 308h3M836 308h3M842 308h3M848 308h3M854 308h3M860 308h3M866 308h3M872 308h3M878 308h3M884 308h3M890 308h3M896 308h3M902 308h3M908 308h3M914 308h3M920 308h3M926 308h3M932 308h3M938 308h3M944 308h3M950 308h3M956 308h3M962 308h3M968 308h3M974 308h3M980 308h3M986 308h3M992 308h3M998 308h3M1004 308h3M1010 308h3M1016 308h3M1022 308h3M1028 308h3M1034 308h3M1040 308h3M1046 308h3M1052 308h3M1058 308h3M1064 308h3M1070 308h3M1076 308h3M1082 308h3M1088 308h3M1094 308h3M1100 308h3M1106 308h3M1112 308h3M1118 308h3M1124 308h3M1130 308h3M1136 308h3M1142 308h3M1148 308h3M1154 308h3M1160 308h3M1166 308h3M1172 308h3M1178 308h3M1184 308h3M1190 308h3M1196 308h3M1202 308h3M1208 308h3M1214 308h3M1220 308h3M1226 308h3M1232 308h3M1238 308h3M1244 308h3M1250 308h3M1256 308h3M1262 308h3M1268 308h3M1274 308h3" stroke="#b8b8b8" stroke-width="1" transform="translate(0,0.5)"/>
<path d="M2 332h3M8 332h3M14 332h3M20 332h3M26 332h3M32 332h3M38 332h3M44 332h3M50 332h3M56 332h3M62 332h3M68 332h3M74 332h3M80 332h3M86 332h3M92 332h3M98 332h3M104 332h3M110 332h3M116 332h3M122 332h3M128 332h3M134 332h3M140 332h3M146 332h3M152 332h3M158 332h3M164 332h3M170 332h3M176 332h3M182 332h3M188 332h3M194 332h3M200 332h3M206 332h3M212 332h3M218 332h3M224 332h3M230 332h3M236 332h3M242 332h3M248 332h3M254 332h3M260 332h3M266 332h3M272 332h3M278 332h3M284 332h3M290 332h3M296 332h3M302 332h3M308 332h3M314 332h3M320 332h3M326 332h3M332 332h3M338 332h3M344 332h3M350 332h3M356 332h3M362 332h3M368 332h3M374 332h3M380 332h3M386 332h3M392 332h3M398 332h3M404 332h3M410 332h3M416 332h3M422 332h3M428 332h3M434 332h3M440 332h3M446 332h3M452 332h3M458 332h3M464 332h3M470 332h3M476 332h3M482 332h3M488 332h3M494 332h3M500 332h3M506 332h3M512 332h3M518 332h3M524 332h3M530 332h3M536 332h3M542 332h3M548 332h3M554 332h3M560 332h3M566 332h3M572 332h3M578 332h3M584 332h3M590 332h3M596 332h3M602 332h3M608 332h3M614 332h3M620 332h3M626 332h3M632 332h3M638 332h3M644 332h3M650 332h3M656 332h3M662 332h3M668 332h3M674 332h3M680 332h3M686 332h3M692 332h3M698 332h3M704 332h3M710 332h3M716 332h3M722 332h3M728 332h3M734 332h3M740 332h3M746 332h3M752 332h3M758 332h3M764 332h3M770 332h3M776 332h3M782 332h3M788 332h3M794 332h3M800 332h3M806 332h3M812 332h3M818 332h3M824 332h3M830 332h3M836 332h3M842 332h3M848 332h3M854 332h3M860 332h3M866 332h3M872 332h3M878 332h3M884 332h3M890 332h3M896 332h3M902 332h3M908 332h3M914 332h3M920 332h3M926 332h3M932 332h3M938 332h3M944 332h3M950 332h3M956 332h3M962 332h3M968 332h3M974 332h3M980 332h3M986 332h3M992 332h3M998 332h3M1004 332h3M1010 332h3M1016 332h3M1022 332h3M1028 332h3M1034 332h3M1040 332h3M1046 332h3M1052 332h3M1058 332h3M1064 332h3M1070 332h3M1076 332h3M1082 332h3M1088 332h3M1094 332h3M1100 332h3M1106 332h3M1112 332h3M1118 332h3M1124 332h3M1130 332h3M1136 332h3M1142 332h3M1148 332h3M1154 332h3M1160 332h3M1166 332h3M1172 332h3M1178 332h3M1184 332h3M1190 332h3M1196 332h3M1202 332h3M1208 332h3M1214 332h3M1220 332h3M1226 332h3M1232 332h3M1238 332h3M1244 332h3M1250 332h3M1256 332h3M1262 332h3M1268 332h3M1274 332h3" stroke="#b8b8b8" stroke-width="1" transform="translate(0,0.5)"/>
<path d="M2 356h3M8 356h3M14 356h3M20 356h3M26 356h3M32 356h3M38 356h3M44 356h3M50 356h3M56 356h3M62 356h3M68 356h3M74 356h3M80 356h3M86 356h3M92 356h3M98 356h3M104 356h3M110 356h3M116 356h3M122 356h3M128 356h3M134 356h3M140 356h3M146 356h3M152 356h3M158 356h3M164 356h3M170 356h3M176 356h3M182 356h3M188 356h3M194 356h3M200 356h3M206 356h3M212 356h3M218 356h3M224 356h3M230 356h3M236 356h3M242 356h3M248 356h3M254 356h3M260 356h3M266 356h3M272 356h3M278 356h3M284 356h3M290 356h3M296 356h3M302 356h3M308 356h3M314 356h3M320 356h3M326 356h3M332 356h3M338 356h3M344 356h3M350 356h3M356 356h3M362 356h3M368 356h3M374 356h3M380 356h3M386 356h3M392 356h3M398 356h3M404 356h3M410 356h3M416 356h3M422 356h3M428 356h3M434 356h3M440 356h3M446 356h3M452 356h3M458 356h3M464 356h3M470 356h3M476 356h3M482 356h3M488 356h3M494 356h3M500 356h3M506 356h3M512 356h3M518 356h3M524 356h3M530 356h3M536 356h3M542 356h3M548 356h3M554 356h3M560 356h3M566 356h3M572 356h3M578 356h3M584 356h3M590 356h3M596 356h3M602 356h3M608 356h3M614 356h3M620 356h3M626 356h3M632 356h3M638 356h3M644 356h3M650 356h3M656 356h3M662 356h3M668 356h3M674 356h3M680 356h3M686 356h3M692 356h3M698 356h3M704 356h3M710 356h3M716 356h3M722 356h3M728 356h3M734 356h3M740 356h3M746 356h3M752 356h3M758 356h3M764 356h3M770 356h3M776 356h3M782 356h3M788 356h3M794 356h3M800 356h3M806 356h3M812 356h3M818 356h3M824 356h3M830 356h3M836 356h3M842 356h3M848 356h3M854 356h3M860 356h3M866 356h3M872 356h3M878 356h3M884 356h3M890 356h3M896 356h3M902 356h3M908 356h3M914 356h3M920 356h3M926 356h3M932 356h3M938 356h3M944 356h3M950 356h3M956 356h3M962 356h3M968 356h3M974 356h3M980 356h3M986 356h3M992 356h3M998 356h3M1004 356h3M1010 356h3M1016 356h3M1022 356h3M1028 356h3M1034 356h3M1040 356h3M1046 356h3M1052 356h3M1058 356h3M1064 356h3M1070 356h3M1076 356h3M1082 356h3M1088 356h3M1094 356h3M1100 356h3M1106 356h3M1112 356h3M1118 356h3M1124 356h3M1130 356h3M1136 356h3M1142 356h3M1148 356h3M1154 356h3M1160 356h3M1166 356h3M1172 356h3M1178 356h3M1184 356h3M1190 356h3M1196 356h3M1202 356h3M1208 356h3M1214 356h3M1220 356h3M1226 356h3M1232 356h3M1238 356h3M1244 356h3M1250 356h3M1256 356h3M1262 356h3M1268 356h3M1274 356h3" stroke="#b8b8b8" stroke-width="1" transform="translate(0,0.5)"/>
<path d="M2 380h3M8 380h3M14 380h3M20 380h3M26 380h3M32 380h3M38 380h3M44 380h3M50 380h3M56 380h3M62 380h3M68 380h3M74 380h3M80 380h3M86 380h3M92 380h3M98 380h3M104 380h3M110 380h3M116 380h3M122 380h3M128 380h3M134 380h3M140 380h3M146 380h3M152 380h3M158 380h3M164 380h3M170 380h3M176 380h3M182 380h3M188 380h3M194 380h3M200 380h3M206 380h3M212 380h3M218 380h3M224 380h3M230 380h3M236 380h3M242 380h3M248 380h3M254 380h3M260 380h3M266 380h3M272 380h3M278 380h3M284 380h3M290 380h3M296 380h3M302 380h3M308 380h3M314 380h3M320 380h3M326 380h3M332 380h3M338 380h3M344 380h3M350 380h3M356 380h3M362 380h3M368 380h3M374 380h3M380 380h3M386 380h3M392 380h3M398 380h3M404 380h3M410 380h3M416 380h3M422 380h3M428 380h3M434 380h3M440 380h3M446 380h3M452 380h3M458 380h3M464 380h3M470 380h3M476 380h3M482 380h3M488 380h3M494 380h3M500 380h3M506 380h3M512 380h3M518 380h3M524 380h3M530 380h3M536 380h3M542 380h3M548 380h3M554 380h3M560 380h3M566 380h3M572 380h3M578 380h3M584 380h3M590 380h3M596 380h3M602 380h3M608 380h3M614 380h3M620 380h3M626 380h3M632 380h3M638 380h3M644 380h3M650 380h3M656 380h3M662 380h3M668 380h3M674 380h3M680 380h3M686 380h3M692 380h3M698 380h3M704 380h3M710 380h3M716 380h3M722 380h3M728 380h3M734 380h3M740 380h3M746 380h3M752 380h3M758 380h3M764 380h3M770 380h3M776 380h3M782 380h3M788 380h3M794 380h3M800 380h3M806 380h3M812 380h3M818 380h3M824 380h3M830 380h3M836 380h3M842 380h3M848 380h3M854 380h3M860 380h3M866 380h3M872 380h3M878 380h3M884 380h3M890 380h3M896 380h3M902 380h3M908 380h3M914 380h3M920 380h3M926 380h3M932 380h3M938 380h3M944 380h3M950 380h3M956 380h3M962 380h3M968 380h3M974 380h3M980 380h3M986 380h3M992 380h3M998 380h3M1004 380h3M1010 380h3M1016 380h3M1022 380h3M1028 380h3M1034 380h3M1040 380h3M1046 380h3M1052 380h3M1058 380h3M1064 380h3M1070 380h3M1076 380h3M1082 380h3M1088 380h3M1094 380h3M1100 380h3M1106 380h3M1112 380h3M1118 380h3M1124 380h3M1130 380h3M1136 380h3M1142 380h3M1148 380h3M1154 380h3M1160 380h3M1166 380h3M1172 380h3M1178 380h3M1184 380h3M1190 380h3M1196 380h3M1202 380h3M1208 380h3M1214 380h3M1220 380h3M1226 380h3M1232 380h3M1238 380h3M1244 380h3M1250 380h3M1256 380h3M1262 380h3M1268 380h3M1274 380h3" stroke="#b8b8b8" stroke-width="1" transform="translate(0,0.5)"/>
<path d="M13 18v2M13 23v3M13 29v3M13 35v3M13 41v3M13 47v3M13 53v3M13 59v3M13 65v3M13 71v3M13 77v3M13 83v3M13 89v3M13 95v3M13 101v3M13 107v3M13 113v3M13 119v3M13 125v3M13 131v3M13 137v3M13 143v3M13 149v3M13 155v3M13 161v3M13 167v3M13 173v3M13 179v3M13 185v3M13 191v3M13 197v3M13 203v3M13 209v3M13 215v3M13 221v3M13 227v3M13 233v3M13 239v3M13 245v3M13 251v3M13 257v3M13 263v3M13 269v3M13 275v3M13 281v3M13 287v3M13 293v3M13 299v3M13 305v3M13 311v3M13 317v3M13 323v3M13 329v3M13 335v3M13 341v3M13 347v3M13 353v3M13 359v3M13 365v3M13 371v3M13 377v3M13 383v3M13 389v3M13 395v3" stroke="#b8b8b8" stroke-width="1" transform="translate(0.5,0)"/>
<path d="M108 18v2M108 23v3M108 29v3M108 35v3M108 41v3M108 47v3M108 53v3M108 59v3M108 65v3M108 71v3M108 77v3M108 83v3M108 89v3M108 95v3M108 101v3M108 107v3M108 113v3M108 119v3M108 125v3M108 131v3M108 137v3M108 143v3M108 149v3M108 155v3M108 161v3M108 167v3M108 173v3M108 179v3M108 185v3M108 191v3M108 197v3M108 203v3M108 209v3M108 215v3M108 221v3M108 227v3M108 233v3M108 239v3M108 245v3M108 251v3M108 257v3M108 263v3M108 269v3M108 275v3M108 281v3M108 287v3M108 293v3M108 299v3M108 305v3M108 311v3M108 317v3M108 323v3M108 329v3M108 335v3M108 341v3M108 347v3M108 353v3M108 359v3M108 365v3M108 371v3M108 377v3M108 383v3M108 389v3M108 395v3" stroke="#b8b8b8" stroke-width="1" transform="translate(0.5,0)"/>
<path d="M208 18v2M208 23v3M208 29v3M208 35v3M208 41v3M208 47v3M208 53v3M208 59v3M208 65v3M208 71v3M208 77v3M208 83v3M208 89v3M208 95v3M208 101v3M208 107v3M208 113v3M208 119v3M208 125v3M208 131v3M208 137v3M208 143v3M208 149v3M208 155v3M208 161v3M208 167v3M208 173v3M208 179v3M208 185v3M208 191v3M208 197v3M208 203v3M208 209v3M208 215v3M208 221v3M208 227v3M208 233v3M208 239v3M208 245v3M208 251v3M208 257v3M208 263v3M208 269v3M208 275v3M208 281v3M208 287v3M208 293v3M208 299v3M208 305v3M208 311v3M208 317v3M208 323v3M208 329v3M208 335v3M208 341v3M208 347v3M208 353v3M208 359v3M208 365v3M208 371v3M208 377v3M208 383v3M208 389v3M208 395v3" stroke="#b8b8b8" stroke-width="1" transform="translate(0.5,0)"/>
<path d="M308 18v2M308 23v3M308 29v3M308 35v3M308 41v3M308 47v3M308 53v3M308 59v3M308 65v3M308 71v3M308 77v3M308 83v3M308 89v3M308 95v3M308 101v3M308 107v3M308 113v3M308 119v3M308 125v3M308 131v3M308 137v3M308 143v3M308 149v3M308 155v3M308 161v3M308 167v3M308 173v3M308 179v3M308 185v3M308 191v3M308 197v3M308 203v3M308 209v3M308 215v3M308 221v3M308 227v3M308 233v3M308 239v3M308 245v3M308 251v3M308 257v3M308 263v3M308 269v3M308 275v3M308 281v3M308 287v3M308 293v3M308 299v3M308 305v3M308 311v3M308 317v3M308 323v3M308 329v3M308 335v3M308 341v3M308 347v3M308 353v3M308 359v3M308 365v3M308 371v3M308 377v3M308 383v3M308 389v3M308 395v3" stroke="#b8b8b8" stroke-width="1" transform="translate(0.5,0)"/>
<path d="M417 18v2M417 23v3M417 29v3M417 35v3M417 41v3M417 47v3M417 53v3M417 59v3M417 65v3M417 71v3M417 77v3M417 83v3M417 89v3M417 95v3M417 101v3M417 107v3M417 113v3M417 119v3M417 125v3M417 131v3M417 137v3M417 143v3M417 149v3M417 155v3M417 161v3M417 167v3M417 173v3M417 179v3M417 185v3M417 191v3M417 197v3M417 203v3M417 209v3M417 215v3M417 221v3M417 227v3M417 233v3M417 239v3M417 245v3M417 251v3M417 257v3M417 263v3M417 269v3M417 275v3M417 281v3M417 287v3M417 293v3M417 299v3M417 305v3M417 311v3M417 317v3M417 323v3M417 329v3M417 335v3M417 341v3M417 347v3M417 353v3M417 359v3M417 365v3M417 371v3M417 377v3M417 383v3M417 389v3M417 395v3" stroke="#b8b8b8" stroke-width="1" transform="translate(0.5,0)"/>
<path d="M517 18v2M517 23v3M517 29v3M517 35v3M517 41v3M517 47v3M517 53v3M517 59v3M517 65v3M517 71v3M517 77v3M517 83v3M517 89v3M517 95v3M517 101v3M517 107v3M517 113v3M517 119v3M517 125v3M517 131v3M517 137v3M517 143v3M517 149v3M517 155v3M517 161v3M517 167v3M517 173v3M517 179v3M517 185v3M517 191v3M517 197v3M517 203v3M517 209v3M517 215v3M517 221v3M517 227v3M517 233v3M517 239v3M517 245v3M517 251v3M517 257v3M517 263v3M517 269v3M517 275v3M517 281v3M517 287v3M517 293v3M517 299v3M517 305v3M517 311v3M517 317v3M517 323v3M517 329v3M517 335v3M517 341v3M517 347v3M517 353v3M517 359v3M517 365v3M517 371v3M517 377v3M517 383v3M517 389v3M517 395v3" stroke="#b8b8b8" stroke-width="1" transform="translate(0.5,0)"/>
<path d="M621 18v2M621 23v3M621 29v3M621 35v3M621 41v3M621 47v3M621 53v3M621 59v3M621 65v3M621 71v3M621 77v3M621 83v3M621 89v3M621 95v3M621 101v3M621 107v3M621 113v3M621 119v3M621 125v3M621 131v3M621 137v3M621 143v3M621 149v3M621 155v3M621 161v3M621 167v3M621 173v3M621 179v3M621 185v3M621 191v3M621 197v3M621 203v3M621 209v3M621 215v3M621 221v3M621 227v3M621 233v3M621 239v3M621 245v3M621 251v3M621 257v3M621 263v3M621 269v3M621 275v3M621 281v3M621 287v3M621 293v3M621 299v3M621 305v3M621 311v3M621 317v3M621 323v3M621 329v3M621 335v3M621 341v3M621 347v3M621 353v3M621 359v3M621 365v3M621 371v3M621 377v3M621 383v3M621 389v3M621 395v3" stroke="#b8b8b8" stroke-width="1" transform="translate(0.5,0)"/>
<path d="M730 18v2M730 23v3M730 29v3M730 35v3M730 41v3M730 47v3M730 53v3M730 59v3M730 65v3M730 71v3M730 77v3M730 83v3M730 89v3M730 95v3M730 101v3M730 107v3M730 113v3M730 119v3M730 125v3M730 131v3M730 137v3M730 143v3M730 149v3M730 155v3M730 161v3M730 167v3M730 173v3M730 179v3M730 185v3M730 191v3M730 197v3M730 203v3M730 209v3M730 215v3M730 221v3M730 227v3M730 233v3M730 239v3M730 245v3M730 251v3M730 257v3M730 263v3M730 269v3M730 275v3M730 281v3M730 287v3M730 293v3M730 299v3M730 305v3M730 311v3M730 317v3M730 323v3M730 329v3M730 335v3M730 341v3M730 347v3M730 353v3M730 359v3M730 365v3M730 371v3M730 377v3M730 383v3M730 389v3M730 395v3" stroke="#b8b8b8" stroke-width="1" transform="translate(0.5,0)"/>
<path d="M825 18v2M825 23v3M825 29v3M825 35v3M825 41v3M825 47v3M825 53v3M825 59v3M825 65v3M825 71v3M825 77v3M825 83v3M825 89v3M825 95v3M825 101v3M825 107v3M825 113v3M825 119v3M825 125v3M825 131v3M825 137v3M825 143v3M825 149v3M825 155v3M825 161v3M825 167v3M825 173v3M825 179v3M825 185v3M825 191v3M825 197v3M825 203v3M825 209v3M825 215v3M825 221v3M825 227v3M825 233v3M825 239v3M825 245v3M825 251v3M825 257v3M825 263v3M825 269v3M825 275v3M825 281v3M825 287v3M825 293v3M825 299v3M825 305v3M825 311v3M825 317v3M825 323v3M825 329v3M825 335v3M825 341v3M825 347v3M825 353v3M825 359v3M825 365v3M825 371v3M825 377v3M825 383v3M825 389v3M825 395v3" stroke="#b8b8b8" stroke-width="1" transform="translate(0.5,0)"/>
<path d="M925 18v2M925 23v3M925 29v3M925 35v3M925 41v3M925 47v3M925 53v3M925 59v3M925 65v3M925 71v3M925 77v3M925 83v3M925 89v3M925 95v3M925 101v3M925 107v3M925 113v3M925 119v3M925 125v3M925 131v3M925 137v3M925 143v3M925 149v3M925 155v3M925 161v3M925 167v3M925 173v3M925 179v3M925 185v3M925 191v3M925 197v3M925 203v3M925 209v3M925 215v3M925 221v3M925 227v3M925 233v3M925 239v3M925 245v3M925 251v3M925 257v3M925 263v3M925 269v3M925 275v3M925 281v3M925 287v3M925 293v3M925 299v3M925 305v3M925 311v3M925 317v3M925 323v3M925 329v3M925 335v3M925 341v3M925 347v3M925 353v3M925 359v3M925 365v3M925 371v3M925 377v3M925 383v3M925 389v3M925 395v3" stroke="#b8b8b8" stroke-width="1" transform="translate(0.5,0)"/>
<path d="M1025 18v2M1025 23v3M1025 29v3M1025 35v3M1025 41v3M1025 47v3M1025 53v3M1025 59v3M1025 65v3M1025 71v3M1025 77v3M1025 83v3M1025 89v3M1025 95v3M1025 101v3M1025 107v3M1025 113v3M1025 119v3M1025 125v3M1025 131v3M1025 137v3M1025 143v3M1025 149v3M1025 155v3M1025 161v3M1025 167v3M1025 173v3M1025 179v3M1025 185v3M1025 191v3M1025 197v3M1025 203v3M1025 209v3M1025 215v3M1025 221v3M1025 227v3M1025 233v3M1025 239v3M1025 245v3M1025 251v3M1025 257v3M1025 263v3M1025 269v3M1025 275v3M1025 281v3M1025 287v3M1025 293v3M1025 299v3M1025 305v3M1025 311v3M1025 317v3M1025 323v3M1025 329v3M1025 335v3M1025 341v3M1025 347v3M1025 353v3M1025 359v3M1025 365v3M1025 371v3M1025 377v3M1025 383v3M1025 389v3M1025 395v3" stroke="#b8b8b8" stroke-width="1" transform="translate(0.5,0)"/>
<path d="M1120 18v2M1120 23v3M1120 29v3M1120 35v3M1120 41v3M1120 47v3M1120 53v3M1120 59v3M1120 65v3M1120 71v3M1120 77v3M1120 83v3M1120 89v3M1120 95v3M1120 101v3M1120 107v3M1120 113v3M1120 119v3M1120 125v3M1120 131v3M1120 137v3M1120 143v3M1120 149v3M1120 155v3M1120 161v3M1120 167v3M1120 173v3M1120 179v3M1120 185v3M1120 191v3M1120 197v3M1120 203v3M1120 209v3M1120 215v3M1120 221v3M1120 227v3M1120 233v3M1120 239v3M1120 245v3M1120 251v3M1120 257v3M1120 263v3M1120 269v3M1120 275v3M1120 281v3M1120 287v3M1120 293v3M1120 299v3M1120 305v3M1120 311v3M1120 317v3M1120 323v3M1120 329v3M1120 335v3M1120 341v3M1120 347v3M1120 353v3M1120 359v3M1120 365v3M1120 371v3M1120 377v3M1120 383v3M1120 389v3M1120 395v3" stroke="#b8b8b8" stroke-width="1" transform="translate(0.5,0)"/>
<path d="M1224 18v2M1224 23v3M1224 29v3M1224 35v3M1224 41v3M1224 47v3M1224 53v3M1224 59v3M1224 65v3M1224 71v3M1224 77v3M1224 83v3M1224 89v3M1224 95v3M1224 101v3M1224 107v3M1224 113v3M1224 119v3M1224 125v3M1224 131v3M1224 137v3M1224 143v3M1224 149v3M1224 155v3M1224 161v3M1224 167v3M1224 173v3M1224 179v3M1224 185v3M1224 191v3M1224 197v3M1224 203v3M1224 209v3M1224 215v3M1224 221v3M1224 227v3M1224 233v3M1224 239v3M1224 245v3M1224 251v3M1224 257v3M1224 263v3M1224 269v3M1224 275v3M1224 281v3M1224 287v3M1224 293v3M1224 299v3M1224 305v3M1224 311v3M1224 317v3M1224 323v3M1224 329v3M1224 335v3M1224 341v3M1224 347v3M1224 353v3M1224 359v3M1224 365v3M1224 371v3M1224 377v3M1224 383v3M1224 389v3M1224 395v3" stroke="#b8b8b8" stroke-width="1" transform="translate(0.5,0)"/>
<rect x="1281" y="22" width="5" height="1" fill="#000" />
<rect x="1281" y="45" width="5" height="1" fill="#000" />
<rect x="1281" y="69" width="5" height="1" fill="#000" />
<rect x="1281" y="93" width="5" height="1" fill="#000" />
<rect x="1281" y="117" width="5" height="1" fill="#000" />
<rect x="1281" y="141" width="5" height="1" fill="#000" />
<rect x="1281" y="165" width="5" height="1" fill="#000" />
<rect x="1281" y="189" width="5" height="1" fill="#000" />
<rect x="1281" y="213" width="5" height="1" fill="#000" />
<rect x="1281" y="237" width="5" height="1" fill="#000" />
<rect x="1281" y="261" width="5" height="1" fill="#000" />
<rect x="1281" y="285" width="5" height="1" fill="#000" />
<rect x="1281" y="308" width="5" height="1" fill="#000" />
<rect x="1281" y="332" width="5" height="1" fill="#000" />
<rect x="1281" y="356" width="5" height="1" fill="#000" />
<rect x="1281" y="380" width="5" height="1" fill="#000" />
<rect x="1281" y="57" width="2" height="1" fill="#000" />
<rect x="1281" y="81" width="2" height="1" fill="#000" />
<rect x="1281" y="105" width="2" height="1" fill="#000" />
<rect x="1281" y="129" width="2" height="1" fill="#000" />
<rect x="1281" y="153" width="2" height="1" fill="#000" />
<rect x="1281" y="177" width="2" height="1" fill="#000" />
<rect x="1281" y="201" width="2" height="1" fill="#000" />
<rect x="1281" y="225" width="2" height="1" fill="#000" />
<rect x="1281" y="249" width="2" height="1" fill="#000" />
<rect x="1281" y="273" width="2" height="1" fill="#000" />
<rect x="1281" y="297" width="2" height="1" fill="#000" />
<rect x="1281" y="320" width="2" height="1" fill="#000" />
<rect x="1281" y="344" width="2" height="1" fill="#000" />
<rect x="1281" y="368" width="2" height="1" fill="#000" />
<rect x="1281" y="392" width="2" height="1" fill="#000" />
<rect x="1281" y="34" width="2" height="1" fill="#000" />
<text x="1324" y="49" font-size="11" fill="#000" text-anchor="end" font-weight="normal" >9.8</text>
<text x="1324" y="73" font-size="11" fill="#000" text-anchor="end" font-weight="normal" >9.6</text>
<text x="1324" y="97" font-size="11" fill="#000" text-anchor="end" font-weight="normal" >9.4</text>
<text x="1324" y="121" font-size="11" fill="#000" text-anchor="end" font-weight="normal" >9.2</text>
<text x="1324" y="145" font-size="11" fill="#000" text-anchor="end" font-weight="normal" >9.0</text>
<text x="1324" y="169" font-size="11" fill="#000" text-anchor="end" font-weight="normal" >8.8</text>
<text x="1324" y="193" font-size="11" fill="#000" text-anchor="end" font-weight="normal" >8.6</text>
<text x="1324" y="217" font-size="11" fill="#000" text-anchor="end" font-weight="normal" >8.4</text>
<text x="1324" y="241" font-size="11" fill="#000" text-anchor="end" font-weight="normal" >8.2</text>
<text x="1324" y="265" font-size="11" fill="#000" text-anchor="end" font-weight="normal" >8.0</text>
<text x="1324" y="289" font-size="11" fill="#000" text-anchor="end" font-weight="normal" >7.8</text>
<text x="1324" y="312" font-size="11" fill="#000" text-anchor="end" font-weight="normal" >7.6</text>
<text x="1324" y="336" font-size="11" fill="#000" text-anchor="end" font-weight="normal" >7.4</text>
<text x="1324" y="360" font-size="11" fill="#000" text-anchor="end" font-weight="normal" >7.2</text>
<text x="1324" y="384" font-size="11" fill="#000" text-anchor="end" font-weight="normal" >7.0</text>
<g transform="translate(16,364.5)"><rect x="0" y="0" width="15.6" height="15.2" rx="2.2" fill="#0b3a78"/><path d="M0 0H14.2L10 11.8L5.5 4.5L0 13.5Z" fill="#1672b6" shape-rendering="geometricPrecision"/><path d="M-1.2 15.5L5.5 4.5L10 11.8L14.5 -1.5" fill="none" stroke="#fff" stroke-width="1.7" stroke-linejoin="miter" shape-rendering="geometricPrecision"/><path d="M14.6 -0.5L17 -0.5L17 3Z M-1 13.5L-1 16L1.5 16Z" fill="#fff" shape-rendering="geometricPrecision"/><text x="20" y="15" font-size="19.5" font-weight="bold" fill="#1466a8" textLength="26" lengthAdjust="spacingAndGlyphs">net</text><text x="46.6" y="15" font-size="20.8" fill="#103a6e" stroke="#ffffff" stroke-width="0.28" textLength="56" lengthAdjust="spacingAndGlyphs">Station</text></g>
<rect x="3" y="40" width="1276" height="1" fill="#2e3a8e" />
<rect x="3" y="62" width="1276" height="1" fill="#2e3a8e" />
<rect x="3" y="101" width="1276" height="1" fill="#2e3a8e" />
<rect x="3" y="134" width="1276" height="1" fill="#2e3a8e" />
<rect x="578" y="84" width="701" height="1" fill="#2e3a8e" />
<rect x="578" y="190" width="701" height="1" fill="#2e3a8e" />
<rect x="578" y="223" width="701" height="1" fill="#2e3a8e" />
<rect x="578" y="255" width="701" height="1" fill="#2e3a8e" />
<rect x="578" y="296" width="701" height="1" fill="#2e3a8e" />
<rect x="578" y="362" width="701" height="1" fill="#2e3a8e" />
<text x="548" y="90" font-size="10.8" fill="#3a4a9e" text-anchor="start" font-weight="normal" >100.0</text>
<text x="548" y="196" font-size="10.8" fill="#3a4a9e" text-anchor="start" font-weight="normal" >61.8</text>
<text x="548" y="229" font-size="10.8" fill="#3a4a9e" text-anchor="start" font-weight="normal" >50.0</text>
<text x="548" y="261" font-size="10.8" fill="#3a4a9e" text-anchor="start" font-weight="normal" >38.2</text>
<text x="548" y="302" font-size="10.8" fill="#3a4a9e" text-anchor="start" font-weight="normal" >23.6</text>
<text x="548" y="368" font-size="10.8" fill="#3a4a9e" text-anchor="start" font-weight="normal" >0.0</text>
<path d="M982 366h1v1h-1zM983 365h1v1h-1zM984 364h1v1h-1zM985 363h1v1h-1zM986 362h1v1h-1zM987 361h1v1h-1zM988 360h1v1h-1zM989 359h1v1h-1zM990 358h1v1h-1zM991 357h1v1h-1zM992 356h1v1h-1zM993 355h1v1h-1zM994 354h1v1h-1zM995 353h1v1h-1zM996 352h1v1h-1zM997 351h1v1h-1zM998 350h1v1h-1zM999 349h1v1h-1zM1000 348h1v1h-1zM1001 347h1v1h-1zM1002 346h1v1h-1zM1003 344h1v1h-1zM1004 343h1v1h-1zM1005 342h1v1h-1zM1006 341h1v1h-1zM1007 340h1v1h-1zM1008 339h1v1h-1zM1009 338h1v1h-1zM1010 337h1v1h-1zM1011 336h1v1h-1zM1012 335h1v1h-1zM1013 334h1v1h-1zM1014 333h1v1h-1zM1015 332h1v1h-1zM1016 331h1v1h-1zM1017 330h1v1h-1zM1018 329h1v1h-1zM1019 328h1v1h-1zM1020 327h1v1h-1zM1021 326h1v1h-1zM1022 325h1v1h-1zM1023 324h1v1h-1zM1024 323h1v1h-1zM1025 322h1v1h-1zM1026 321h1v1h-1zM1027 320h1v1h-1zM1028 319h1v1h-1zM1029 318h1v1h-1zM1030 317h1v1h-1zM1031 316h1v1h-1zM1032 315h1v1h-1zM1033 314h1v1h-1zM1034 313h1v1h-1zM1035 312h1v1h-1zM1036 311h1v1h-1zM1037 310h1v1h-1zM1038 309h1v1h-1zM1039 308h1v1h-1zM1040 307h1v1h-1zM1041 306h1v1h-1zM1042 305h1v1h-1zM1043 304h1v1h-1zM1044 302h1v1h-1zM1045 301h1v1h-1zM1046 300h1v1h-1zM1047 299h1v1h-1zM1048 298h1v1h-1zM1049 297h1v1h-1zM1050 296h1v1h-1zM1051 295h1v1h-1zM1052 294h1v1h-1zM1053 293h1v1h-1zM1054 292h1v1h-1zM1055 291h1v1h-1zM1056 290h1v1h-1zM1057 289h1v1h-1zM1058 288h1v1h-1zM1059 287h1v1h-1zM1060 286h1v1h-1zM1061 285h1v1h-1zM1062 284h1v1h-1zM1063 283h1v1h-1zM1064 282h1v1h-1zM1065 281h1v1h-1zM1066 280h1v1h-1zM1067 279h1v1h-1zM1068 278h1v1h-1zM1069 277h1v1h-1zM1070 276h1v1h-1zM1071 275h1v1h-1zM1072 274h1v1h-1zM1073 273h1v1h-1zM1074 272h1v1h-1zM1075 271h1v1h-1zM1076 270h1v1h-1zM1077 269h1v1h-1zM1078 268h1v1h-1zM1079 267h1v1h-1zM1080 266h1v1h-1zM1081 265h1v1h-1zM1082 264h1v1h-1zM1083 263h1v1h-1zM1084 262h1v1h-1zM1085 261h1v1h-1zM1086 259h1v1h-1zM1087 258h1v1h-1zM1088 257h1v1h-1zM1089 256h1v1h-1zM1090 255h1v1h-1zM1091 254h1v1h-1zM1092 253h1v1h-1zM1093 252h1v1h-1zM1094 251h1v1h-1zM1095 250h1v1h-1zM1096 249h1v1h-1zM1097 248h1v1h-1zM1098 247h1v1h-1zM1099 246h1v1h-1zM1100 245h1v1h-1zM1101 244h1v1h-1zM1102 243h1v1h-1zM1103 242h1v1h-1zM1104 241h1v1h-1zM1105 240h1v1h-1zM1106 239h1v1h-1zM1107 238h1v1h-1zM1108 237h1v1h-1zM1109 236h1v1h-1zM1110 235h1v1h-1zM1111 234h1v1h-1zM1112 233h1v1h-1zM1113 232h1v1h-1zM1114 231h1v1h-1zM1115 230h1v1h-1zM1116 229h1v1h-1zM1117 228h1v1h-1zM1118 227h1v1h-1zM1119 226h1v1h-1zM1120 225h1v1h-1zM1121 224h1v1h-1zM1122 223h1v1h-1zM1123 222h1v1h-1zM1124 221h1v1h-1zM1125 220h1v1h-1zM1126 219h1v1h-1zM1127 217h1v1h-1zM1128 216h1v1h-1zM1129 215h1v1h-1zM1130 214h1v1h-1zM1131 213h1v1h-1zM1132 212h1v1h-1zM1133 211h1v1h-1zM1134 210h1v1h-1zM1135 209h1v1h-1zM1136 208h1v1h-1zM1137 207h1v1h-1zM1138 206h1v1h-1zM1139 205h1v1h-1zM1140 204h1v1h-1zM1141 203h1v1h-1zM1142 202h1v1h-1zM1143 201h1v1h-1zM1144 200h1v1h-1zM1145 199h1v1h-1zM1146 198h1v1h-1zM1147 197h1v1h-1zM1148 196h1v1h-1zM1149 195h1v1h-1zM1150 194h1v1h-1zM1151 193h1v1h-1zM1152 192h1v1h-1zM1153 191h1v1h-1zM1154 190h1v1h-1zM1155 189h1v1h-1zM1156 188h1v1h-1zM1157 187h1v1h-1zM1158 186h1v1h-1zM1159 185h1v1h-1zM1160 184h1v1h-1zM1161 183h1v1h-1zM1162 182h1v1h-1zM1163 181h1v1h-1zM1164 180h1v1h-1zM1165 179h1v1h-1zM1166 178h1v1h-1zM1167 177h1v1h-1zM1168 175h1v1h-1zM1169 174h1v1h-1zM1170 173h1v1h-1zM1171 172h1v1h-1zM1172 171h1v1h-1zM1173 170h1v1h-1zM1174 169h1v1h-1zM1175 168h1v1h-1zM1176 167h1v1h-1zM1177 166h1v1h-1zM1178 165h1v1h-1zM1179 164h1v1h-1zM1180 163h1v1h-1zM1181 162h1v1h-1zM1182 161h1v1h-1zM1183 160h1v1h-1zM1184 159h1v1h-1zM1185 158h1v1h-1zM1186 157h1v1h-1zM1187 156h1v1h-1zM1188 155h1v1h-1zM1189 154h1v1h-1zM1190 153h1v1h-1zM1191 152h1v1h-1zM1192 151h1v1h-1zM1193 150h1v1h-1zM1194 149h1v1h-1zM1195 148h1v1h-1zM1196 147h1v1h-1zM1197 146h1v1h-1zM1198 145h1v1h-1zM1199 144h1v1h-1zM1200 143h1v1h-1zM1201 142h1v1h-1zM1202 141h1v1h-1zM1203 140h1v1h-1zM1204 139h1v1h-1zM1205 138h1v1h-1zM1206 137h1v1h-1zM1207 136h1v1h-1zM1208 135h1v1h-1zM1209 134h1v1h-1zM1210 132h1v1h-1zM1211 131h1v1h-1zM1212 130h1v1h-1zM1213 129h1v1h-1zM1214 128h1v1h-1zM1215 127h1v1h-1zM1216 126h1v1h-1zM1217 125h1v1h-1zM1218 124h1v1h-1zM1219 123h1v1h-1zM1220 122h1v1h-1zM1221 121h1v1h-1zM1222 120h1v1h-1zM1223 119h1v1h-1zM1224 118h1v1h-1zM1225 117h1v1h-1zM1226 116h1v1h-1zM1227 115h1v1h-1zM1228 114h1v1h-1zM1229 113h1v1h-1zM1230 112h1v1h-1zM1231 111h1v1h-1zM1232 110h1v1h-1zM1233 109h1v1h-1zM1234 108h1v1h-1zM1235 107h1v1h-1zM1236 106h1v1h-1zM1237 105h1v1h-1zM1238 104h1v1h-1zM1239 103h1v1h-1zM1240 102h1v1h-1zM1241 101h1v1h-1zM1242 100h1v1h-1zM1243 99h1v1h-1zM1244 98h1v1h-1zM1245 97h1v1h-1zM1246 96h1v1h-1zM1247 95h1v1h-1zM1248 94h1v1h-1zM1249 93h1v1h-1zM1250 92h1v1h-1zM1251 90h1v1h-1zM1252 89h1v1h-1zM1253 88h1v1h-1zM1254 87h1v1h-1zM1255 86h1v1h-1zM1256 85h1v1h-1zM1257 84h1v1h-1zM1258 83h1v1h-1zM1259 82h1v1h-1zM1260 81h1v1h-1zM1261 80h1v1h-1zM1262 79h1v1h-1zM1263 78h1v1h-1zM1264 77h1v1h-1zM1265 76h1v1h-1zM1266 75h1v1h-1zM1267 74h1v1h-1zM1268 73h1v1h-1zM1269 72h1v1h-1zM1270 71h1v1h-1zM1271 70h1v1h-1z" fill="#2e3a8e"/>
<ellipse cx="1029.4" cy="270.4" rx="9.2" ry="7.1" fill="none" stroke="#2e3a8e" stroke-width="1.1" shape-rendering="geometricPrecision"/>
<ellipse cx="1027.1" cy="313.7" rx="6.4" ry="5.0" fill="none" stroke="#2e3a8e" stroke-width="1.1" shape-rendering="geometricPrecision"/>
<path d="M4 213h1v21h-1zM5 217h1v1h-1zM13 190h1v29h-1zM14 195h1v1h-1zM23 154h1v42h-1zM24 159h1v1h-1zM27 146h1v23h-1zM28 152h1v1h-1zM56 201h1v30h-1zM57 202h1v1h-1zM65 199h1v14h-1zM66 200h1v1h-1zM75 184h1v22h-1zM76 191h1v1h-1zM84 177h1v24h-1zM85 184h1v1h-1zM99 187h1v23h-1zM100 191h1v1h-1zM108 197h1v14h-1zM109 202h1v1h-1zM127 182h1v28h-1zM128 183h1v1h-1zM137 183h1v14h-1zM138 187h1v1h-1zM141 183h1v13h-1zM142 186h1v1h-1zM146 179h1v16h-1zM147 182h1v1h-1zM156 193h1v26h-1zM157 196h1v1h-1zM165 189h1v18h-1zM166 195h1v1h-1zM170 176h1v28h-1zM171 180h1v1h-1zM175 170h1v14h-1zM176 172h1v1h-1zM179 163h1v11h-1zM180 165h1v1h-1zM184 150h1v14h-1zM185 151h1v1h-1zM189 141h1v17h-1zM190 145h1v1h-1zM194 137h1v12h-1zM195 139h1v1h-1zM203 134h1v22h-1zM204 138h1v1h-1zM217 136h1v16h-1zM218 139h1v1h-1zM222 104h1v41h-1zM223 113h1v1h-1zM227 73h1v41h-1zM228 81h1v1h-1zM232 71h1v23h-1zM233 80h1v1h-1zM251 95h1v22h-1zM252 100h1v1h-1zM270 93h1v17h-1zM271 103h1v1h-1zM308 128h1v23h-1zM309 128h1v1h-1zM312 123h1v16h-1zM313 128h1v1h-1zM317 109h1v27h-1zM318 111h1v1h-1zM336 142h1v15h-1zM337 146h1v1h-1zM350 156h1v24h-1zM351 164h1v1h-1zM360 154h1v25h-1zM361 160h1v1h-1zM379 153h1v30h-1zM380 160h1v1h-1zM384 147h1v19h-1zM385 152h1v1h-1zM388 125h1v35h-1zM389 127h1v1h-1zM393 115h1v14h-1zM394 123h1v1h-1zM403 118h1v20h-1zM404 128h1v1h-1zM407 106h1v18h-1zM408 117h1v1h-1zM441 201h1v31h-1zM442 212h1v1h-1zM445 197h1v20h-1zM446 210h1v1h-1zM450 191h1v24h-1zM451 203h1v1h-1zM455 191h1v9h-1zM456 194h1v1h-1zM469 191h1v12h-1zM470 194h1v1h-1zM474 185h1v9h-1zM475 191h1v1h-1zM483 171h1v25h-1zM484 172h1v1h-1zM493 150h1v18h-1zM494 151h1v1h-1zM498 132h1v23h-1zM499 135h1v1h-1zM502 123h1v19h-1zM503 135h1v1h-1zM517 145h1v18h-1zM518 147h1v1h-1zM521 139h1v10h-1zM522 145h1v1h-1zM526 120h1v25h-1zM527 125h1v1h-1zM531 82h1v50h-1zM532 87h1v1h-1zM550 102h1v18h-1zM551 102h1v1h-1zM574 95h1v19h-1zM575 103h1v1h-1zM578 84h1v17h-1zM579 88h1v1h-1zM597 106h1v24h-1zM598 107h1v1h-1zM607 95h1v22h-1zM608 98h1v1h-1zM616 97h1v18h-1zM617 104h1v1h-1zM621 90h1v18h-1zM622 98h1v1h-1zM631 119h1v24h-1zM632 124h1v1h-1zM635 107h1v14h-1zM636 120h1v1h-1zM659 148h1v22h-1zM660 158h1v1h-1zM678 186h1v37h-1zM679 193h1v1h-1zM688 162h1v38h-1zM689 164h1v1h-1zM692 156h1v21h-1zM693 157h1v1h-1zM697 143h1v29h-1zM698 148h1v1h-1zM702 135h1v18h-1zM703 139h1v1h-1zM711 139h1v20h-1zM712 145h1v1h-1zM726 172h1v22h-1zM727 178h1v1h-1zM740 195h1v26h-1zM741 199h1v1h-1zM754 210h1v21h-1zM755 211h1v1h-1zM759 190h1v17h-1zM760 204h1v1h-1zM768 217h1v25h-1zM769 229h1v1h-1zM773 220h1v17h-1zM774 220h1v1h-1zM778 201h1v37h-1zM779 206h1v1h-1zM783 188h1v22h-1zM784 194h1v1h-1zM797 233h1v29h-1zM798 240h1v1h-1zM802 219h1v17h-1zM803 229h1v1h-1zM806 210h1v18h-1zM807 220h1v1h-1zM816 212h1v13h-1zM817 216h1v1h-1zM821 209h1v14h-1zM822 210h1v1h-1zM830 211h1v14h-1zM831 213h1v1h-1zM835 198h1v15h-1zM836 206h1v1h-1zM844 206h1v20h-1zM845 208h1v1h-1zM878 298h1v50h-1zM879 300h1v1h-1zM887 279h1v21h-1zM888 280h1v1h-1zM897 272h1v20h-1zM898 285h1v1h-1zM901 268h1v26h-1zM902 269h1v1h-1zM925 271h1v21h-1zM926 284h1v1h-1zM939 315h1v25h-1zM940 336h1v1h-1zM944 312h1v39h-1zM945 326h1v1h-1zM954 340h1v23h-1zM955 347h1v1h-1zM958 327h1v24h-1zM959 335h1v1h-1zM968 327h1v39h-1zM969 334h1v1h-1zM973 326h1v17h-1zM974 329h1v1h-1zM977 308h1v25h-1zM978 315h1v1h-1zM982 289h1v20h-1zM983 295h1v1h-1zM987 285h1v30h-1zM988 290h1v1h-1zM992 268h1v25h-1zM993 277h1v1h-1zM996 258h1v29h-1zM997 275h1v1h-1zM1001 267h1v24h-1zM1002 273h1v1h-1zM1015 309h1v25h-1zM1016 320h1v1h-1zM1025 318h1v28h-1zM1026 319h1v1h-1zM1030 277h1v31h-1zM1031 283h1v1h-1zM1034 238h1v26h-1zM1035 256h1v1h-1zM1044 243h1v22h-1zM1045 246h1v1h-1zM1053 251h1v22h-1zM1054 262h1v1h-1zM1063 240h1v37h-1zM1064 245h1v1h-1zM1068 208h1v33h-1zM1069 215h1v1h-1zM1077 207h1v29h-1zM1078 209h1v1h-1zM1082 186h1v16h-1zM1083 188h1v1h-1zM1087 180h1v22h-1zM1088 181h1v1h-1zM1096 163h1v19h-1zM1097 171h1v1h-1zM1110 164h1v21h-1zM1111 168h1v1h-1zM1115 159h1v14h-1zM1116 160h1v1h-1zM1129 166h1v20h-1zM1130 169h1v1h-1zM1134 156h1v14h-1zM1135 160h1v1h-1zM1139 149h1v15h-1zM1140 153h1v1h-1zM1153 152h1v18h-1zM1154 154h1v1h-1zM1158 144h1v11h-1zM1159 146h1v1h-1zM1163 138h1v13h-1zM1164 141h1v1h-1zM1167 127h1v14h-1zM1168 134h1v1h-1zM1182 138h1v17h-1zM1183 147h1v1h-1zM1186 106h1v46h-1zM1187 113h1v1h-1zM1191 104h1v18h-1zM1192 108h1v1h-1zM1196 86h1v26h-1zM1197 90h1v1h-1zM1205 97h1v19h-1zM1206 98h1v1h-1zM1215 87h1v12h-1zM1216 93h1v1h-1zM1224 71h1v29h-1zM1225 72h1v1h-1zM1229 60h1v15h-1zM1230 62h1v1h-1zM1234 49h1v9h-1zM1235 54h1v1h-1zM1243 61h1v12h-1zM1244 66h1v1h-1zM1253 58h1v19h-1zM1254 59h1v1h-1z" fill="#2b3a8f"/><path d="M8 204h1v14h-1zM9 217h1v1h-1zM18 187h1v18h-1zM19 196h1v1h-1zM32 151h1v16h-1zM33 163h1v1h-1zM37 158h1v27h-1zM38 170h1v1h-1zM42 162h1v12h-1zM43 174h1v1h-1zM46 165h1v32h-1zM47 196h1v1h-1zM51 192h1v31h-1zM52 207h1v1h-1zM61 196h1v22h-1zM62 217h1v1h-1zM70 196h1v18h-1zM71 204h1v1h-1zM80 184h1v13h-1zM81 196h1v1h-1zM89 185h1v26h-1zM90 206h1v1h-1zM94 195h1v21h-1zM95 208h1v1h-1zM103 194h1v19h-1zM104 202h1v1h-1zM113 201h1v18h-1zM114 205h1v1h-1zM118 199h1v18h-1zM119 208h1v1h-1zM122 199h1v18h-1zM123 211h1v1h-1zM132 181h1v17h-1zM133 191h1v1h-1zM151 177h1v40h-1zM152 211h1v1h-1zM160 195h1v23h-1zM161 201h1v1h-1zM198 137h1v13h-1zM199 144h1v1h-1zM208 131h1v13h-1zM209 138h1v1h-1zM213 132h1v16h-1zM214 141h1v1h-1zM236 80h1v12h-1zM237 86h1v1h-1zM241 86h1v17h-1zM242 99h1v1h-1zM246 91h1v18h-1zM247 103h1v1h-1zM255 98h1v21h-1zM256 118h1v1h-1zM260 116h1v11h-1zM261 118h1v1h-1zM265 111h1v11h-1zM266 118h1v1h-1zM274 95h1v16h-1zM275 111h1v1h-1zM279 107h1v13h-1zM280 115h1v1h-1zM284 109h1v11h-1zM285 119h1v1h-1zM289 117h1v24h-1zM290 132h1v1h-1zM293 129h1v20h-1zM294 141h1v1h-1zM298 129h1v20h-1zM299 144h1v1h-1zM303 138h1v19h-1zM304 149h1v1h-1zM322 110h1v17h-1zM323 124h1v1h-1zM327 122h1v18h-1zM328 139h1v1h-1zM331 134h1v28h-1zM332 160h1v1h-1zM341 147h1v35h-1zM342 167h1v1h-1zM346 152h1v26h-1zM347 172h1v1h-1zM355 158h1v28h-1zM356 176h1v1h-1zM365 161h1v19h-1zM366 176h1v1h-1zM369 177h1v13h-1zM370 179h1v1h-1zM374 178h1v14h-1zM375 185h1v1h-1zM398 117h1v24h-1zM399 132h1v1h-1zM412 116h1v39h-1zM413 150h1v1h-1zM417 148h1v26h-1zM418 170h1v1h-1zM422 157h1v19h-1zM423 172h1v1h-1zM426 164h1v28h-1zM427 187h1v1h-1zM431 185h1v29h-1zM432 197h1v1h-1zM436 195h1v26h-1zM437 217h1v1h-1zM460 189h1v19h-1zM461 199h1v1h-1zM464 186h1v27h-1zM465 210h1v1h-1zM479 188h1v11h-1zM480 191h1v1h-1zM488 163h1v22h-1zM489 179h1v1h-1zM507 135h1v21h-1zM508 149h1v1h-1zM512 142h1v20h-1zM513 151h1v1h-1zM536 82h1v18h-1zM537 89h1v1h-1zM540 85h1v16h-1zM541 92h1v1h-1zM545 91h1v20h-1zM546 110h1v1h-1zM555 98h1v15h-1zM556 105h1v1h-1zM559 104h1v10h-1zM560 105h1v1h-1zM564 102h1v14h-1zM565 114h1v1h-1zM569 113h1v11h-1zM570 117h1v1h-1zM583 71h1v22h-1zM584 92h1v1h-1zM588 90h1v15h-1zM589 104h1v1h-1zM593 102h1v15h-1zM594 117h1v1h-1zM602 93h1v24h-1zM603 110h1v1h-1zM612 95h1v33h-1zM613 120h1v1h-1zM626 96h1v43h-1zM627 138h1v1h-1zM640 122h1v22h-1zM641 142h1v1h-1zM645 135h1v20h-1zM646 153h1v1h-1zM650 138h1v32h-1zM651 156h1v1h-1zM654 145h1v23h-1zM655 163h1v1h-1zM664 157h1v27h-1zM665 163h1v1h-1zM669 157h1v49h-1zM670 200h1v1h-1zM673 184h1v65h-1zM674 217h1v1h-1zM683 184h1v21h-1zM684 193h1v1h-1zM707 121h1v50h-1zM708 160h1v1h-1zM716 158h1v38h-1zM717 188h1v1h-1zM721 180h1v43h-1zM722 203h1v1h-1zM730 175h1v20h-1zM731 194h1v1h-1zM735 184h1v34h-1zM736 215h1v1h-1zM745 174h1v40h-1zM746 205h1v1h-1zM749 200h1v36h-1zM750 223h1v1h-1zM764 203h1v27h-1zM765 229h1v1h-1zM787 192h1v23h-1zM788 208h1v1h-1zM792 254h1v13h-1zM793 264h1v1h-1zM811 212h1v18h-1zM812 221h1v1h-1zM825 213h1v16h-1zM826 224h1v1h-1zM840 198h1v49h-1zM841 240h1v1h-1zM849 204h1v15h-1zM850 218h1v1h-1zM854 228h1v22h-1zM855 245h1v1h-1zM859 234h1v28h-1zM860 257h1v1h-1zM863 246h1v21h-1zM864 258h1v1h-1zM868 258h1v33h-1zM869 290h1v1h-1zM873 278h1v38h-1zM874 316h1v1h-1zM882 303h1v22h-1zM883 309h1v1h-1zM892 268h1v40h-1zM893 286h1v1h-1zM906 271h1v8h-1zM907 272h1v1h-1zM911 272h1v27h-1zM912 278h1v1h-1zM916 280h1v16h-1zM917 290h1v1h-1zM920 288h1v9h-1zM921 290h1v1h-1zM930 284h1v43h-1zM931 324h1v1h-1zM935 312h1v28h-1zM936 339h1v1h-1zM949 327h1v37h-1zM950 354h1v1h-1zM963 322h1v29h-1zM964 345h1v1h-1zM1006 275h1v23h-1zM1007 286h1v1h-1zM1011 279h1v47h-1zM1012 320h1v1h-1zM1020 309h1v22h-1zM1021 321h1v1h-1zM1039 258h1v22h-1zM1040 259h1v1h-1zM1049 256h1v27h-1zM1050 274h1v1h-1zM1058 260h1v16h-1zM1059 270h1v1h-1zM1072 201h1v25h-1zM1073 223h1v1h-1zM1091 170h1v27h-1zM1092 183h1v1h-1zM1101 162h1v18h-1zM1102 172h1v1h-1zM1106 171h1v13h-1zM1107 179h1v1h-1zM1120 150h1v19h-1zM1121 160h1v1h-1zM1125 155h1v25h-1zM1126 176h1v1h-1zM1144 155h1v15h-1zM1145 157h1v1h-1zM1148 155h1v25h-1zM1149 168h1v1h-1zM1172 133h1v22h-1zM1173 147h1v1h-1zM1177 143h1v23h-1zM1178 154h1v1h-1zM1201 87h1v19h-1zM1202 99h1v1h-1zM1210 92h1v15h-1zM1211 106h1v1h-1zM1220 83h1v18h-1zM1221 93h1v1h-1zM1239 52h1v24h-1zM1240 70h1v1h-1zM1248 61h1v23h-1zM1249 74h1v1h-1z" fill="#d9481c"/>
<rect x="12" y="27" width="40" height="20" fill="#5a5a5a" />
<rect x="13" y="28" width="38" height="18" fill="#ffffff" />
<rect x="14" y="29" width="37" height="17" fill="#eeeeee" />
<text x="14.6" y="42.2" font-size="14" fill="#000" text-anchor="start" font-weight="bold" textLength="6.6" lengthAdjust="spacingAndGlyphs">2</text>
<rect x="1282" y="51" width="29" height="14" fill="#2e3a8e" />
<text x="1283" y="62" font-size="11" fill="#ffffff" text-anchor="start" font-weight="normal" >9.692</text>
<rect x="0" y="402" width="1331" height="1" fill="#a8a8a8" />
<rect x="0" y="403" width="1331" height="1" fill="#5e5e5e" />
<rect x="0" y="403" width="1" height="54" fill="#a0a0a0" />
<rect x="1" y="403" width="1" height="54" fill="#5e5e5e" />
<rect x="2" y="404" width="1328" height="14" fill="#c2cedb" />
<rect x="4.5" y="405" width="11.5" height="11" fill="#6a6a6a" rx="1.5" shape-rendering="geometricPrecision"/>
<rect x="5" y="406" width="10" height="9" fill="#f6f6f6" />
<rect x="4" y="406" width="1" height="9" fill="#c8c8dc" />
<rect x="6" y="407" width="4" height="7" fill="url(#ig)"/>
<rect x="14" y="407" width="1" height="3" fill="#2a6ac0" />
<rect x="14" y="409" width="1" height="2" fill="#30a050" />
<text x="19" y="413.2" font-size="9.3" fill="#cc3a16" text-anchor="start" font-weight="normal" textLength="165.5" lengthAdjust="spacingAndGlyphs">RSI (Relative Strength Index) (69.4124)</text>
<rect x="1302" y="406" width="12" height="10" fill="#7a7a7a" />
<rect x="1302" y="406" width="11" height="9" fill="#ffffff" />
<rect x="1303" y="407" width="10" height="8" fill="#f0f0f0" />
<rect x="1305" y="408" width="6" height="5" fill="#000" />
<rect x="1306" y="410" width="4" height="2" fill="#fff" />
<rect x="1316" y="406" width="12" height="10" fill="#7a7a7a" />
<rect x="1316" y="406" width="11" height="9" fill="#ffffff" />
<rect x="1317" y="407" width="10" height="8" fill="#f0f0f0" />
<path d="M1319 408L1325 414M1325 408L1319 414" stroke="#000" stroke-width="1.15" shape-rendering="geometricPrecision"/>
<rect x="2" y="419" width="1328" height="1" fill="#a04242" />
<rect x="2" y="456" width="1328" height="1" fill="#a04242" />
<rect x="2" y="419" width="1" height="38" fill="#a04242" />
<rect x="1329" y="419" width="1" height="38" fill="#a04242" />
<rect x="1279" y="419" width="2" height="38" fill="#a04242" />
<path d="M13 420v2M13 425v3M13 431v3M13 437v3M13 443v3M13 449v3M13 455v1" stroke="#b8b8b8" stroke-width="1" transform="translate(0.5,0)"/>
<path d="M108 420v2M108 425v3M108 431v3M108 437v3M108 443v3M108 449v3M108 455v1" stroke="#b8b8b8" stroke-width="1" transform="translate(0.5,0)"/>
<path d="M208 420v2M208 425v3M208 431v3M208 437v3M208 443v3M208 449v3M208 455v1" stroke="#b8b8b8" stroke-width="1" transform="translate(0.5,0)"/>
<path d="M308 420v2M308 425v3M308 431v3M308 437v3M308 443v3M308 449v3M308 455v1" stroke="#b8b8b8" stroke-width="1" transform="translate(0.5,0)"/>
<path d="M417 420v2M417 425v3M417 431v3M417 437v3M417 443v3M417 449v3M417 455v1" stroke="#b8b8b8" stroke-width="1" transform="translate(0.5,0)"/>
<path d="M517 420v2M517 425v3M517 431v3M517 437v3M517 443v3M517 449v3M517 455v1" stroke="#b8b8b8" stroke-width="1" transform="translate(0.5,0)"/>
<path d="M621 420v2M621 425v3M621 431v3M621 437v3M621 443v3M621 449v3M621 455v1" stroke="#b8b8b8" stroke-width="1" transform="translate(0.5,0)"/>
<path d="M730 420v2M730 425v3M730 431v3M730 437v3M730 443v3M730 449v3M730 455v1" stroke="#b8b8b8" stroke-width="1" transform="translate(0.5,0)"/>
<path d="M825 420v2M825 425v3M825 431v3M825 437v3M825 443v3M825 449v3M825 455v1" stroke="#b8b8b8" stroke-width="1" transform="translate(0.5,0)"/>
<path d="M925 420v2M925 425v3M925 431v3M925 437v3M925 443v3M925 449v3M925 455v1" stroke="#b8b8b8" stroke-width="1" transform="translate(0.5,0)"/>
<path d="M1025 420v2M1025 425v3M1025 431v3M1025 437v3M1025 443v3M1025 449v3M1025 455v1" stroke="#b8b8b8" stroke-width="1" transform="translate(0.5,0)"/>
<path d="M1120 420v2M1120 425v3M1120 431v3M1120 437v3M1120 443v3M1120 449v3M1120 455v1" stroke="#b8b8b8" stroke-width="1" transform="translate(0.5,0)"/>
<path d="M1224 420v2M1224 425v3M1224 431v3M1224 437v3M1224 443v3M1224 449v3M1224 455v1" stroke="#b8b8b8" stroke-width="1" transform="translate(0.5,0)"/>
<clipPath id="c_rsi"><rect x="3" y="420" width="1276" height="36"/></clipPath>
<path d="M2 440h3M8 440h3M14 440h3M20 440h3M26 440h3M32 440h3M38 440h3M44 440h3M50 440h3M56 440h3M62 440h3M68 440h3M74 440h3M80 440h3M86 440h3M92 440h3M98 440h3M104 440h3M110 440h3M116 440h3M122 440h3M128 440h3M134 440h3M140 440h3M146 440h3M152 440h3M158 440h3M164 440h3M170 440h3M176 440h3M182 440h3M188 440h3M194 440h3M200 440h3M206 440h3M212 440h3M218 440h3M224 440h3M230 440h3M236 440h3M242 440h3M248 440h3M254 440h3M260 440h3M266 440h3M272 440h3M278 440h3M284 440h3M290 440h3M296 440h3M302 440h3M308 440h3M314 440h3M320 440h3M326 440h3M332 440h3M338 440h3M344 440h3M350 440h3M356 440h3M362 440h3M368 440h3M374 440h3M380 440h3M386 440h3M392 440h3M398 440h3M404 440h3M410 440h3M416 440h3M422 440h3M428 440h3M434 440h3M440 440h3M446 440h3M452 440h3M458 440h3M464 440h3M470 440h3M476 440h3M482 440h3M488 440h3M494 440h3M500 440h3M506 440h3M512 440h3M518 440h3M524 440h3M530 440h3M536 440h3M542 440h3M548 440h3M554 440h3M560 440h3M566 440h3M572 440h3M578 440h3M584 440h3M590 440h3M596 440h3M602 440h3M608 440h3M614 440h3M620 440h3M626 440h3M632 440h3M638 440h3M644 440h3M650 440h3M656 440h3M662 440h3M668 440h3M674 440h3M680 440h3M686 440h3M692 440h3M698 440h3M704 440h3M710 440h3M716 440h3M722 440h3M728 440h3M734 440h3M740 440h3M746 440h3M752 440h3M758 440h3M764 440h3M770 440h3M776 440h3M782 440h3M788 440h3M794 440h3M800 440h3M806 440h3M812 440h3M818 440h3M824 440h3M830 440h3M836 440h3M842 440h3M848 440h3M854 440h3M860 440h3M866 440h3M872 440h3M878 440h3M884 440h3M890 440h3M896 440h3M902 440h3M908 440h3M914 440h3M920 440h3M926 440h3M932 440h3M938 440h3M944 440h3M950 440h3M956 440h3M962 440h3M968 440h3M974 440h3M980 440h3M986 440h3M992 440h3M998 440h3M1004 440h3M1010 440h3M1016 440h3M1022 440h3M1028 440h3M1034 440h3M1040 440h3M1046 440h3M1052 440h3M1058 440h3M1064 440h3M1070 440h3M1076 440h3M1082 440h3M1088 440h3M1094 440h3M1100 440h3M1106 440h3M1112 440h3M1118 440h3M1124 440h3M1130 440h3M1136 440h3M1142 440h3M1148 440h3M1154 440h3M1160 440h3M1166 440h3M1172 440h3M1178 440h3M1184 440h3M1190 440h3M1196 440h3M1202 440h3M1208 440h3M1214 440h3M1220 440h3M1226 440h3M1232 440h3M1238 440h3M1244 440h3M1250 440h3M1256 440h3M1262 440h3M1268 440h3M1274 440h3" stroke="#b8b8b8" stroke-width="1" transform="translate(0,0.5)"/>
<g clip-path="url(#c_rsi)"><g transform="translate(16,422.5)"><rect x="0" y="0" width="15.6" height="15.2" rx="2.2" fill="#0b3a78"/><path d="M0 0H14.2L10 11.8L5.5 4.5L0 13.5Z" fill="#1672b6" shape-rendering="geometricPrecision"/><path d="M-1.2 15.5L5.5 4.5L10 11.8L14.5 -1.5" fill="none" stroke="#fff" stroke-width="1.7" stroke-linejoin="miter" shape-rendering="geometricPrecision"/><path d="M14.6 -0.5L17 -0.5L17 3Z M-1 13.5L-1 16L1.5 16Z" fill="#fff" shape-rendering="geometricPrecision"/><text x="20" y="15" font-size="19.5" font-weight="bold" fill="#1466a8" textLength="26" lengthAdjust="spacingAndGlyphs">net</text><text x="46.6" y="15" font-size="20.8" fill="#103a6e" stroke="#ffffff" stroke-width="0.28" textLength="56" lengthAdjust="spacingAndGlyphs">Station</text></g></g>
<rect x="3" y="428" width="1276" height="1" fill="#2e3a8e" />
<rect x="3" y="453" width="1276" height="1" fill="#2e3a8e" />
<polyline points="2.1,440.9 4.4,439.4 6.3,439.4 8.3,440.6 13.2,435.5 18.0,435.5 22.9,430.6 28.3,429.5 32.2,430.8 37.1,432.8 42.0,434.5 45.9,438.6 50.7,441.4 56.6,441.4 61.0,443.5 65.4,440.4 69.3,441.4 75.1,438.6 80.0,439.4 83.9,437.0 89.3,440.9 93.7,442.3 99.5,438.4 103.4,441.4 116.1,441.6 122.0,443.5 125.0,439.4 127.9,436.5 131.8,438.4 134.8,438.4 135.7,437.3 143.0,437.3 145.5,436.3 147.4,437.0 151.3,443.3 157.2,440.2 160.6,441.6 165.0,439.4 170.9,436.5 174.8,435.3 179.6,433.4 184.0,431.4 187.9,430.6 193.3,429.2 195.2,429.2 199.1,431.4 202.1,430.4 209.9,430.4 211.8,431.4 217.2,431.4 223.5,424.6 227.4,422.3 233.3,422.3 235.7,423.6 241.6,429.2 244.5,430.4 248.9,430.4 251.8,429.2 254.8,434.3 255.4,435.3 262.2,435.3 264.6,436.5 270.5,432.4 274.9,435.3 278.3,436.3 281.2,436.3 284.1,437.5 290.0,441.6 293.9,443.5 298.8,444.5 302.7,445.3 308.5,439.4 312.4,439.2 317.3,435.3 321.7,437.5 326.1,440.9 331.5,446.4 336.3,443.5 341.2,447.2 345.6,448.4 350.5,445.3 355.4,448.2 360.2,443.5 366.1,446.4 369.0,447.2 373.4,448.4 379.8,441.9 384.3,439.9 388.7,436.3 392.1,435.3 394.5,435.3 398.4,437.3 403.3,436.0 407.2,434.0 412.6,441.6 417.4,445.1 422.8,445.3 430.6,449.2 436.5,451.3 439.4,450.6 443.3,449.7 447.2,449.4 452.1,447.4 456.0,445.3 460.9,446.2 464.3,448.2 469.6,444.3 472.6,443.5 479.4,443.3 483.8,439.4 488.2,441.6 493.0,435.5 497.0,433.6 501.3,432.4 504.8,434.7 507.3,436.3 517.6,436.3 520.5,435.3 525.4,433.4 531.2,427.5 538.5,427.5 541.0,428.7 545.9,433.6 548.8,432.4 552.2,432.4 553.7,433.6 560.5,433.6 563.4,435.3 568.3,436.5 573.2,434.3 578.5,430.4 582.9,432.4 587.8,434.3 593.2,439.4 598.0,436.3 602.0,437.3 606.8,435.3 612.2,440.4 617.1,437.3 620.5,436.3 622.0,437.5 626.3,444.5 629.8,442.1 634.3,440.2 636.7,441.2 640.6,444.5 644.5,446.4 652.3,446.4 654.3,447.4 658.2,446.4 661.1,446.4 664.0,447.4 669.4,452.3 673.3,454.2 678.2,448.4 683.5,448.4 689.4,442.3 692.3,441.2 695.2,440.4 698.2,440.4 702.1,438.2 707.4,442.5 711.3,439.4 716.2,446.2 720.6,447.4 727.0,443.3 730.9,445.3 735.2,447.4 739.6,445.3 745.0,445.3 749.4,448.4 754.8,445.1 758.8,444.3 764.6,447.4 770.0,447.4 773.4,446.2 778.3,443.3 783.2,441.2 786.1,442.1 792.1,450.3 797.3,446.4 801.7,444.3 804.6,443.3 812.9,443.3 815.4,442.1 819.3,441.4 822.2,441.6 825.6,443.8 830.0,441.6 834.4,440.4 840.2,445.5 844.1,440.4 849.0,441.2 854.4,445.3 857.8,446.4 863.2,446.4 872.9,452.6 879.8,449.4 881.8,450.3 887.7,445.3 890.6,446.4 897.4,446.4 901.3,443.3 908.2,443.3 912.1,444.5 916.0,446.4 922.8,446.4 925.2,445.3 930.6,450.1 933.5,451.3 940.4,451.3 943.8,449.4 949.6,452.6 957.9,448.2 963.8,449.4 967.7,447.4 972.6,446.4 977.4,443.3 982.3,439.4 985.2,438.2 988.2,438.2 991.6,436.3 997.9,436.3 1000.4,435.3 1004.8,437.7 1006.8,438.9 1011.7,445.3 1014.1,444.3 1017.6,444.3 1019.5,445.3 1022.4,445.3 1025.4,444.3 1029.3,438.6 1034.6,433.4 1037.6,434.3 1040.0,434.3 1043.9,432.4 1049.3,438.4 1052.7,436.5 1055.6,436.5 1057.6,437.5 1061.5,435.3 1065.4,432.4 1068.8,430.4 1072.7,432.4 1076.6,430.6 1079.0,430.4 1082.0,428.5 1085.9,427.5 1089.8,427.5 1091.2,428.5 1094.6,427.5 1102.4,427.5 1105.9,429.5 1109.3,427.5 1113.7,426.2 1117.1,426.2 1121.0,428.2 1125.9,431.4 1127.8,430.4 1129.8,430.4 1132.2,429.5 1137.6,428.3 1141.8,428.3 1144.8,429.8 1149.0,432.6 1153.2,430.4 1156.2,429.8 1161.0,428.3 1167.6,428.3 1171.2,430.2 1176.7,433.8 1182.1,432.2 1186.3,427.8 1190.5,426.6 1195.9,424.4 1201.3,427.8 1205.5,427.8 1210.3,429.5 1215.1,428.3 1221.1,428.3 1224.7,425.6 1228.3,424.6 1233.7,423.4 1238.5,428.0 1243.3,428.3 1248.1,430.7 1252.3,428.3" fill="none" stroke="#d24a1e" stroke-width="1" shape-rendering="crispEdges"/>
<rect x="1281" y="440" width="5" height="1" fill="#000" />
<rect x="1281" y="434" width="2" height="1" fill="#000" />
<rect x="1281" y="453" width="2" height="1" fill="#000" />
<rect x="1281" y="421" width="2" height="1" fill="#000" />
<rect x="1281" y="446" width="2" height="1" fill="#000" />
<rect x="1282" y="421" width="29" height="14" fill="#c84a1a" />
<text x="1283" y="432" font-size="11" fill="#fff" text-anchor="start" font-weight="normal" >69.41</text>
<text x="1324" y="444" font-size="11" fill="#000" text-anchor="end" font-weight="normal" >50</text>
<rect x="0" y="460" width="1331" height="1" fill="#a8a8a8" />
<rect x="0" y="461" width="1331" height="1" fill="#5e5e5e" />
<rect x="0" y="461" width="1" height="44" fill="#a0a0a0" />
<rect x="1" y="461" width="1" height="44" fill="#5e5e5e" />
<rect x="2" y="462" width="1328" height="14" fill="#c2cedb" />
<rect x="4.5" y="463" width="11.5" height="11" fill="#6a6a6a" rx="1.5" shape-rendering="geometricPrecision"/>
<rect x="5" y="464" width="10" height="9" fill="#f6f6f6" />
<rect x="4" y="464" width="1" height="9" fill="#c8c8dc" />
<rect x="6" y="465" width="4" height="7" fill="url(#ig)"/>
<rect x="14" y="465" width="1" height="3" fill="#2a6ac0" />
<rect x="14" y="467" width="1" height="2" fill="#30a050" />
<text x="19" y="471.2" font-size="9.3" fill="#cc3a16" text-anchor="start" font-weight="normal" textLength="86.8" lengthAdjust="spacingAndGlyphs">Media móvil (8.6053)</text>
<rect x="1302" y="464" width="12" height="10" fill="#7a7a7a" />
<rect x="1302" y="464" width="11" height="9" fill="#ffffff" />
<rect x="1303" y="465" width="10" height="8" fill="#f0f0f0" />
<rect x="1305" y="466" width="6" height="5" fill="#000" />
<rect x="1306" y="468" width="4" height="2" fill="#fff" />
<rect x="1316" y="464" width="12" height="10" fill="#7a7a7a" />
<rect x="1316" y="464" width="11" height="9" fill="#ffffff" />
<rect x="1317" y="465" width="10" height="8" fill="#f0f0f0" />
<path d="M1319 466L1325 472M1325 466L1319 472" stroke="#000" stroke-width="1.15" shape-rendering="geometricPrecision"/>
<rect x="2" y="477" width="1328" height="1" fill="#a04242" />
<rect x="2" y="504" width="1328" height="1" fill="#a04242" />
<rect x="2" y="477" width="1" height="28" fill="#a04242" />
<rect x="1329" y="477" width="1" height="28" fill="#a04242" />
<rect x="1279" y="477" width="2" height="28" fill="#a04242" />
<path d="M13 479v3M13 485v3M13 491v3M13 497v3M13 503v1" stroke="#b8b8b8" stroke-width="1" transform="translate(0.5,0)"/>
<path d="M108 479v3M108 485v3M108 491v3M108 497v3M108 503v1" stroke="#b8b8b8" stroke-width="1" transform="translate(0.5,0)"/>
<path d="M208 479v3M208 485v3M208 491v3M208 497v3M208 503v1" stroke="#b8b8b8" stroke-width="1" transform="translate(0.5,0)"/>
<path d="M308 479v3M308 485v3M308 491v3M308 497v3M308 503v1" stroke="#b8b8b8" stroke-width="1" transform="translate(0.5,0)"/>
<path d="M417 479v3M417 485v3M417 491v3M417 497v3M417 503v1" stroke="#b8b8b8" stroke-width="1" transform="translate(0.5,0)"/>
<path d="M517 479v3M517 485v3M517 491v3M517 497v3M517 503v1" stroke="#b8b8b8" stroke-width="1" transform="translate(0.5,0)"/>
<path d="M621 479v3M621 485v3M621 491v3M621 497v3M621 503v1" stroke="#b8b8b8" stroke-width="1" transform="translate(0.5,0)"/>
<path d="M730 479v3M730 485v3M730 491v3M730 497v3M730 503v1" stroke="#b8b8b8" stroke-width="1" transform="translate(0.5,0)"/>
<path d="M825 479v3M825 485v3M825 491v3M825 497v3M825 503v1" stroke="#b8b8b8" stroke-width="1" transform="translate(0.5,0)"/>
<path d="M925 479v3M925 485v3M925 491v3M925 497v3M925 503v1" stroke="#b8b8b8" stroke-width="1" transform="translate(0.5,0)"/>
<path d="M1025 479v3M1025 485v3M1025 491v3M1025 497v3M1025 503v1" stroke="#b8b8b8" stroke-width="1" transform="translate(0.5,0)"/>
<path d="M1120 479v3M1120 485v3M1120 491v3M1120 497v3M1120 503v1" stroke="#b8b8b8" stroke-width="1" transform="translate(0.5,0)"/>
<path d="M1224 479v3M1224 485v3M1224 491v3M1224 497v3M1224 503v1" stroke="#b8b8b8" stroke-width="1" transform="translate(0.5,0)"/>
<clipPath id="c_ma1"><rect x="3" y="478" width="1276" height="26"/></clipPath>
<path d="M2 496h3M8 496h3M14 496h3M20 496h3M26 496h3M32 496h3M38 496h3M44 496h3M50 496h3M56 496h3M62 496h3M68 496h3M74 496h3M80 496h3M86 496h3M92 496h3M98 496h3M104 496h3M110 496h3M116 496h3M122 496h3M128 496h3M134 496h3M140 496h3M146 496h3M152 496h3M158 496h3M164 496h3M170 496h3M176 496h3M182 496h3M188 496h3M194 496h3M200 496h3M206 496h3M212 496h3M218 496h3M224 496h3M230 496h3M236 496h3M242 496h3M248 496h3M254 496h3M260 496h3M266 496h3M272 496h3M278 496h3M284 496h3M290 496h3M296 496h3M302 496h3M308 496h3M314 496h3M320 496h3M326 496h3M332 496h3M338 496h3M344 496h3M350 496h3M356 496h3M362 496h3M368 496h3M374 496h3M380 496h3M386 496h3M392 496h3M398 496h3M404 496h3M410 496h3M416 496h3M422 496h3M428 496h3M434 496h3M440 496h3M446 496h3M452 496h3M458 496h3M464 496h3M470 496h3M476 496h3M482 496h3M488 496h3M494 496h3M500 496h3M506 496h3M512 496h3M518 496h3M524 496h3M530 496h3M536 496h3M542 496h3M548 496h3M554 496h3M560 496h3M566 496h3M572 496h3M578 496h3M584 496h3M590 496h3M596 496h3M602 496h3M608 496h3M614 496h3M620 496h3M626 496h3M632 496h3M638 496h3M644 496h3M650 496h3M656 496h3M662 496h3M668 496h3M674 496h3M680 496h3M686 496h3M692 496h3M698 496h3M704 496h3M710 496h3M716 496h3M722 496h3M728 496h3M734 496h3M740 496h3M746 496h3M752 496h3M758 496h3M764 496h3M770 496h3M776 496h3M782 496h3M788 496h3M794 496h3M800 496h3M806 496h3M812 496h3M818 496h3M824 496h3M830 496h3M836 496h3M842 496h3M848 496h3M854 496h3M860 496h3M866 496h3M872 496h3M878 496h3M884 496h3M890 496h3M896 496h3M902 496h3M908 496h3M914 496h3M920 496h3M926 496h3M932 496h3M938 496h3M944 496h3M950 496h3M956 496h3M962 496h3M968 496h3M974 496h3M980 496h3M986 496h3M992 496h3M998 496h3M1004 496h3M1010 496h3M1016 496h3M1022 496h3M1028 496h3M1034 496h3M1040 496h3M1046 496h3M1052 496h3M1058 496h3M1064 496h3M1070 496h3M1076 496h3M1082 496h3M1088 496h3M1094 496h3M1100 496h3M1106 496h3M1112 496h3M1118 496h3M1124 496h3M1130 496h3M1136 496h3M1142 496h3M1148 496h3M1154 496h3M1160 496h3M1166 496h3M1172 496h3M1178 496h3M1184 496h3M1190 496h3M1196 496h3M1202 496h3M1208 496h3M1214 496h3M1220 496h3M1226 496h3M1232 496h3M1238 496h3M1244 496h3M1250 496h3M1256 496h3M1262 496h3M1268 496h3M1274 496h3" stroke="#b8b8b8" stroke-width="1" transform="translate(0,0.5)"/>
<g clip-path="url(#c_ma1)"><g transform="translate(16,470.5)"><rect x="0" y="0" width="15.6" height="15.2" rx="2.2" fill="#0b3a78"/><path d="M0 0H14.2L10 11.8L5.5 4.5L0 13.5Z" fill="#1672b6" shape-rendering="geometricPrecision"/><path d="M-1.2 15.5L5.5 4.5L10 11.8L14.5 -1.5" fill="none" stroke="#fff" stroke-width="1.7" stroke-linejoin="miter" shape-rendering="geometricPrecision"/><path d="M14.6 -0.5L17 -0.5L17 3Z M-1 13.5L-1 16L1.5 16Z" fill="#fff" shape-rendering="geometricPrecision"/><text x="20" y="15" font-size="19.5" font-weight="bold" fill="#1466a8" textLength="26" lengthAdjust="spacingAndGlyphs">net</text><text x="46.6" y="15" font-size="20.8" fill="#103a6e" stroke="#ffffff" stroke-width="0.28" textLength="56" lengthAdjust="spacingAndGlyphs">Station</text></g></g>
<path d="M3 503h4v1h-4zM7 502h14v1h-14zM21 501h19v1h-19zM40 500h14v1h-14zM54 499h19v1h-19zM73 498h15v1h-15zM88 497h18v1h-18zM106 496h20v1h-20zM126 495h18v1h-18zM144 494h25v1h-25zM169 493h18v1h-18zM187 492h25v1h-25zM212 491h18v1h-18zM230 490h19v1h-19zM249 489h14v1h-14zM263 488h24v1h-24zM287 487h23v1h-23zM310 486h34v1h-34zM344 485h52v1h-52zM396 484h109v1h-109zM505 483h33v1h-33zM538 482h38v1h-38zM576 481h34v1h-34zM610 480h42v1h-42zM652 479h67v1h-67zM719 480h62v1h-62zM781 479h5v1h-5zM786 480h118v1h-118zM904 481h57v1h-57zM961 482h43v1h-43zM1004 483h176v1h-176zM1180 484h42v1h-42zM1222 483h31v1h-31z" fill="#d24a1e"/>
<rect x="1281" y="496" width="5" height="1" fill="#000" />
<rect x="1281" y="484" width="2" height="1" fill="#000" />
<rect x="1282" y="478" width="23" height="12" fill="#c84a1a" />
<text x="1283" y="488" font-size="11" fill="#fff" text-anchor="start" font-weight="normal" >8.61</text>
<rect x="0" y="508" width="1331" height="1" fill="#a8a8a8" />
<rect x="0" y="509" width="1331" height="1" fill="#5e5e5e" />
<rect x="0" y="509" width="1" height="55" fill="#a0a0a0" />
<rect x="1" y="509" width="1" height="55" fill="#5e5e5e" />
<rect x="2" y="510" width="1328" height="14" fill="#c2cedb" />
<rect x="4.5" y="511" width="11.5" height="11" fill="#6a6a6a" rx="1.5" shape-rendering="geometricPrecision"/>
<rect x="5" y="512" width="10" height="9" fill="#f6f6f6" />
<rect x="4" y="512" width="1" height="9" fill="#c8c8dc" />
<rect x="6" y="513" width="4" height="7" fill="url(#ig)"/>
<rect x="14" y="513" width="1" height="3" fill="#2a6ac0" />
<rect x="14" y="515" width="1" height="2" fill="#30a050" />
<text x="19" y="519.2" font-size="9.3" fill="#cc3a16" text-anchor="start" font-weight="normal" textLength="86.8" lengthAdjust="spacingAndGlyphs">Media móvil (9.0377)</text>
<rect x="1302" y="512" width="12" height="10" fill="#7a7a7a" />
<rect x="1302" y="512" width="11" height="9" fill="#ffffff" />
<rect x="1303" y="513" width="10" height="8" fill="#f0f0f0" />
<rect x="1305" y="514" width="6" height="5" fill="#000" />
<rect x="1306" y="516" width="4" height="2" fill="#fff" />
<rect x="1316" y="512" width="12" height="10" fill="#7a7a7a" />
<rect x="1316" y="512" width="11" height="9" fill="#ffffff" />
<rect x="1317" y="513" width="10" height="8" fill="#f0f0f0" />
<path d="M1319 514L1325 520M1325 514L1319 520" stroke="#000" stroke-width="1.15" shape-rendering="geometricPrecision"/>
<rect x="2" y="525" width="1328" height="1" fill="#a04242" />
<rect x="2" y="563" width="1328" height="1" fill="#a04242" />
<rect x="2" y="525" width="1" height="39" fill="#a04242" />
<rect x="1329" y="525" width="1" height="39" fill="#a04242" />
<rect x="1279" y="525" width="2" height="39" fill="#a04242" />
<path d="M13 527v3M13 533v3M13 539v3M13 545v3M13 551v3M13 557v3" stroke="#b8b8b8" stroke-width="1" transform="translate(0.5,0)"/>
<path d="M108 527v3M108 533v3M108 539v3M108 545v3M108 551v3M108 557v3" stroke="#b8b8b8" stroke-width="1" transform="translate(0.5,0)"/>
<path d="M208 527v3M208 533v3M208 539v3M208 545v3M208 551v3M208 557v3" stroke="#b8b8b8" stroke-width="1" transform="translate(0.5,0)"/>
<path d="M308 527v3M308 533v3M308 539v3M308 545v3M308 551v3M308 557v3" stroke="#b8b8b8" stroke-width="1" transform="translate(0.5,0)"/>
<path d="M417 527v3M417 533v3M417 539v3M417 545v3M417 551v3M417 557v3" stroke="#b8b8b8" stroke-width="1" transform="translate(0.5,0)"/>
<path d="M517 527v3M517 533v3M517 539v3M517 545v3M517 551v3M517 557v3" stroke="#b8b8b8" stroke-width="1" transform="translate(0.5,0)"/>
<path d="M621 527v3M621 533v3M621 539v3M621 545v3M621 551v3M621 557v3" stroke="#b8b8b8" stroke-width="1" transform="translate(0.5,0)"/>
<path d="M730 527v3M730 533v3M730 539v3M730 545v3M730 551v3M730 557v3" stroke="#b8b8b8" stroke-width="1" transform="translate(0.5,0)"/>
<path d="M825 527v3M825 533v3M825 539v3M825 545v3M825 551v3M825 557v3" stroke="#b8b8b8" stroke-width="1" transform="translate(0.5,0)"/>
<path d="M925 527v3M925 533v3M925 539v3M925 545v3M925 551v3M925 557v3" stroke="#b8b8b8" stroke-width="1" transform="translate(0.5,0)"/>
<path d="M1025 527v3M1025 533v3M1025 539v3M1025 545v3M1025 551v3M1025 557v3" stroke="#b8b8b8" stroke-width="1" transform="translate(0.5,0)"/>
<path d="M1120 527v3M1120 533v3M1120 539v3M1120 545v3M1120 551v3M1120 557v3" stroke="#b8b8b8" stroke-width="1" transform="translate(0.5,0)"/>
<path d="M1224 527v3M1224 533v3M1224 539v3M1224 545v3M1224 551v3M1224 557v3" stroke="#b8b8b8" stroke-width="1" transform="translate(0.5,0)"/>
<clipPath id="c_ma2"><rect x="3" y="526" width="1276" height="37"/></clipPath>
<path d="M2 531h3M8 531h3M14 531h3M20 531h3M26 531h3M32 531h3M38 531h3M44 531h3M50 531h3M56 531h3M62 531h3M68 531h3M74 531h3M80 531h3M86 531h3M92 531h3M98 531h3M104 531h3M110 531h3M116 531h3M122 531h3M128 531h3M134 531h3M140 531h3M146 531h3M152 531h3M158 531h3M164 531h3M170 531h3M176 531h3M182 531h3M188 531h3M194 531h3M200 531h3M206 531h3M212 531h3M218 531h3M224 531h3M230 531h3M236 531h3M242 531h3M248 531h3M254 531h3M260 531h3M266 531h3M272 531h3M278 531h3M284 531h3M290 531h3M296 531h3M302 531h3M308 531h3M314 531h3M320 531h3M326 531h3M332 531h3M338 531h3M344 531h3M350 531h3M356 531h3M362 531h3M368 531h3M374 531h3M380 531h3M386 531h3M392 531h3M398 531h3M404 531h3M410 531h3M416 531h3M422 531h3M428 531h3M434 531h3M440 531h3M446 531h3M452 531h3M458 531h3M464 531h3M470 531h3M476 531h3M482 531h3M488 531h3M494 531h3M500 531h3M506 531h3M512 531h3M518 531h3M524 531h3M530 531h3M536 531h3M542 531h3M548 531h3M554 531h3M560 531h3M566 531h3M572 531h3M578 531h3M584 531h3M590 531h3M596 531h3M602 531h3M608 531h3M614 531h3M620 531h3M626 531h3M632 531h3M638 531h3M644 531h3M650 531h3M656 531h3M662 531h3M668 531h3M674 531h3M680 531h3M686 531h3M692 531h3M698 531h3M704 531h3M710 531h3M716 531h3M722 531h3M728 531h3M734 531h3M740 531h3M746 531h3M752 531h3M758 531h3M764 531h3M770 531h3M776 531h3M782 531h3M788 531h3M794 531h3M800 531h3M806 531h3M812 531h3M818 531h3M824 531h3M830 531h3M836 531h3M842 531h3M848 531h3M854 531h3M860 531h3M866 531h3M872 531h3M878 531h3M884 531h3M890 531h3M896 531h3M902 531h3M908 531h3M914 531h3M920 531h3M926 531h3M932 531h3M938 531h3M944 531h3M950 531h3M956 531h3M962 531h3M968 531h3M974 531h3M980 531h3M986 531h3M992 531h3M998 531h3M1004 531h3M1010 531h3M1016 531h3M1022 531h3M1028 531h3M1034 531h3M1040 531h3M1046 531h3M1052 531h3M1058 531h3M1064 531h3M1070 531h3M1076 531h3M1082 531h3M1088 531h3M1094 531h3M1100 531h3M1106 531h3M1112 531h3M1118 531h3M1124 531h3M1130 531h3M1136 531h3M1142 531h3M1148 531h3M1154 531h3M1160 531h3M1166 531h3M1172 531h3M1178 531h3M1184 531h3M1190 531h3M1196 531h3M1202 531h3M1208 531h3M1214 531h3M1220 531h3M1226 531h3M1232 531h3M1238 531h3M1244 531h3M1250 531h3M1256 531h3M1262 531h3M1268 531h3M1274 531h3" stroke="#b8b8b8" stroke-width="1" transform="translate(0,0.5)"/>
<path d="M2 553h3M8 553h3M14 553h3M20 553h3M26 553h3M32 553h3M38 553h3M44 553h3M50 553h3M56 553h3M62 553h3M68 553h3M74 553h3M80 553h3M86 553h3M92 553h3M98 553h3M104 553h3M110 553h3M116 553h3M122 553h3M128 553h3M134 553h3M140 553h3M146 553h3M152 553h3M158 553h3M164 553h3M170 553h3M176 553h3M182 553h3M188 553h3M194 553h3M200 553h3M206 553h3M212 553h3M218 553h3M224 553h3M230 553h3M236 553h3M242 553h3M248 553h3M254 553h3M260 553h3M266 553h3M272 553h3M278 553h3M284 553h3M290 553h3M296 553h3M302 553h3M308 553h3M314 553h3M320 553h3M326 553h3M332 553h3M338 553h3M344 553h3M350 553h3M356 553h3M362 553h3M368 553h3M374 553h3M380 553h3M386 553h3M392 553h3M398 553h3M404 553h3M410 553h3M416 553h3M422 553h3M428 553h3M434 553h3M440 553h3M446 553h3M452 553h3M458 553h3M464 553h3M470 553h3M476 553h3M482 553h3M488 553h3M494 553h3M500 553h3M506 553h3M512 553h3M518 553h3M524 553h3M530 553h3M536 553h3M542 553h3M548 553h3M554 553h3M560 553h3M566 553h3M572 553h3M578 553h3M584 553h3M590 553h3M596 553h3M602 553h3M608 553h3M614 553h3M620 553h3M626 553h3M632 553h3M638 553h3M644 553h3M650 553h3M656 553h3M662 553h3M668 553h3M674 553h3M680 553h3M686 553h3M692 553h3M698 553h3M704 553h3M710 553h3M716 553h3M722 553h3M728 553h3M734 553h3M740 553h3M746 553h3M752 553h3M758 553h3M764 553h3M770 553h3M776 553h3M782 553h3M788 553h3M794 553h3M800 553h3M806 553h3M812 553h3M818 553h3M824 553h3M830 553h3M836 553h3M842 553h3M848 553h3M854 553h3M860 553h3M866 553h3M872 553h3M878 553h3M884 553h3M890 553h3M896 553h3M902 553h3M908 553h3M914 553h3M920 553h3M926 553h3M932 553h3M938 553h3M944 553h3M950 553h3M956 553h3M962 553h3M968 553h3M974 553h3M980 553h3M986 553h3M992 553h3M998 553h3M1004 553h3M1010 553h3M1016 553h3M1022 553h3M1028 553h3M1034 553h3M1040 553h3M1046 553h3M1052 553h3M1058 553h3M1064 553h3M1070 553h3M1076 553h3M1082 553h3M1088 553h3M1094 553h3M1100 553h3M1106 553h3M1112 553h3M1118 553h3M1124 553h3M1130 553h3M1136 553h3M1142 553h3M1148 553h3M1154 553h3M1160 553h3M1166 553h3M1172 553h3M1178 553h3M1184 553h3M1190 553h3M1196 553h3M1202 553h3M1208 553h3M1214 553h3M1220 553h3M1226 553h3M1232 553h3M1238 553h3M1244 553h3M1250 553h3M1256 553h3M1262 553h3M1268 553h3M1274 553h3" stroke="#b8b8b8" stroke-width="1" transform="translate(0,0.5)"/>
<g clip-path="url(#c_ma2)"><g transform="translate(16,529)"><rect x="0" y="0" width="15.6" height="15.2" rx="2.2" fill="#0b3a78"/><path d="M0 0H14.2L10 11.8L5.5 4.5L0 13.5Z" fill="#1672b6" shape-rendering="geometricPrecision"/><path d="M-1.2 15.5L5.5 4.5L10 11.8L14.5 -1.5" fill="none" stroke="#fff" stroke-width="1.7" stroke-linejoin="miter" shape-rendering="geometricPrecision"/><path d="M14.6 -0.5L17 -0.5L17 3Z M-1 13.5L-1 16L1.5 16Z" fill="#fff" shape-rendering="geometricPrecision"/><text x="20" y="15" font-size="19.5" font-weight="bold" fill="#1466a8" textLength="26" lengthAdjust="spacingAndGlyphs">net</text><text x="46.6" y="15" font-size="20.8" fill="#103a6e" stroke="#ffffff" stroke-width="0.28" textLength="56" lengthAdjust="spacingAndGlyphs">Station</text></g></g>
<path d="M3 545h8v1h-8zM11 544h24v1h-24zM35 543h109v1h-109zM144 542h29v1h-29zM173 541h14v1h-14zM187 540h9v1h-9zM196 539h29v1h-29zM225 538h9v1h-9zM234 537h10v1h-10zM244 536h9v1h-9zM253 535h15v1h-15zM268 534h9v1h-9zM277 533h14v1h-14zM291 532h15v1h-15zM306 531h14v1h-14zM320 530h28v1h-28zM348 529h29v1h-29zM377 530h14v1h-14zM391 529h24v1h-24zM415 530h10v1h-10zM425 531h9v1h-9zM434 532h10v1h-10zM444 533h14v1h-14zM458 534h9v1h-9zM467 535h15v1h-15zM482 536h52v1h-52zM534 535h14v1h-14zM548 534h14v1h-14zM562 533h24v1h-24zM586 532h28v1h-28zM614 531h10v1h-10zM624 530h9v1h-9zM633 529h24v1h-24zM657 528h15v1h-15zM672 529h47v1h-47zM719 530h10v1h-10zM729 531h9v1h-9zM738 532h10v1h-10zM748 533h9v1h-9zM757 534h10v1h-10zM767 535h9v1h-9zM776 536h10v1h-10zM786 537h9v1h-9zM795 538h5v1h-5zM800 539h10v1h-10zM810 540h9v1h-9zM819 541h14v1h-14zM833 542h19v1h-19zM852 543h14v1h-14zM866 544h10v1h-10zM876 545h5v1h-5zM881 546h9v1h-9zM890 547h5v1h-5zM895 548h9v1h-9zM904 549h15v1h-15zM919 550h9v1h-9zM928 551h10v1h-10zM938 552h4v1h-4zM942 553h10v1h-10zM952 554h9v1h-9zM961 555h10v1h-10zM971 556h5v1h-5zM976 557h23v1h-23zM999 558h10v1h-10zM1009 559h9v1h-9zM1018 560h19v1h-19zM1037 561h24v1h-24zM1061 560h14v1h-14z" fill="#d24a1e"/><polyline points="1075.0,559.4 1084.9,558.5 1094.0,557.7 1103.9,556.6 1113.0,555.6 1122.9,553.9 1132.0,552.8 1137.0,551.9 1146.1,549.4 1156.0,549.0 1161.0,547.8 1170.0,546.1 1180.0,545.0 1189.0,543.2 1198.1,542.3 1203.1,540.9 1208.1,538.7 1217.1,537.4 1222.1,537.4 1227.1,535.4 1237.0,533.9 1246.1,532.1 1252.7,530.4" fill="none" stroke="#d24a1e" stroke-width="1" shape-rendering="crispEdges"/>
<rect x="1281" y="531" width="5" height="1" fill="#000" />
<rect x="1281" y="542" width="2" height="1" fill="#000" />
<rect x="1281" y="553" width="5" height="1" fill="#000" />
<rect x="1282" y="525" width="23" height="12" fill="#c84a1a" />
<text x="1283" y="535" font-size="11" fill="#fff" text-anchor="start" font-weight="normal" >9.04</text>
<rect x="2" y="564" width="1278" height="1" fill="#a04242" />
<rect x="0" y="564" width="2" height="18" fill="#000" />
<rect x="2" y="579" width="1278" height="1" fill="#a04242" />
<rect x="2" y="564" width="1" height="16" fill="#a04242" />
<rect x="1279" y="564" width="1" height="16" fill="#a04242" />
<rect x="1282" y="566" width="50" height="16" fill="#ececec" />
<rect x="13" y="564" width="1" height="5" fill="#000" />
<text x="16" y="576.8" font-size="11.3" fill="#000" text-anchor="start" font-weight="normal" >Abr</text>
<rect x="108" y="564" width="1" height="5" fill="#000" />
<text x="111" y="576.8" font-size="11.3" fill="#000" text-anchor="start" font-weight="normal" >May</text>
<rect x="208" y="564" width="1" height="5" fill="#000" />
<text x="211" y="576.8" font-size="11.3" fill="#000" text-anchor="start" font-weight="normal" >Jun</text>
<rect x="308" y="564" width="1" height="5" fill="#000" />
<text x="311" y="576.8" font-size="11.3" fill="#000" text-anchor="start" font-weight="normal" >Jul</text>
<rect x="417" y="564" width="1" height="5" fill="#000" />
<text x="420" y="576.8" font-size="11.3" fill="#000" text-anchor="start" font-weight="normal" >Ago</text>
<rect x="517" y="564" width="1" height="5" fill="#000" />
<text x="520" y="576.8" font-size="11.3" fill="#000" text-anchor="start" font-weight="normal" >Sep</text>
<rect x="621" y="564" width="1" height="5" fill="#000" />
<text x="624" y="576.8" font-size="11.3" fill="#000" text-anchor="start" font-weight="normal" >Oct</text>
<rect x="730" y="564" width="1" height="5" fill="#000" />
<text x="733" y="576.8" font-size="11.3" fill="#000" text-anchor="start" font-weight="normal" >Nov</text>
<rect x="825" y="564" width="1" height="5" fill="#000" />
<text x="828" y="576.8" font-size="11.3" fill="#000" text-anchor="start" font-weight="normal" >Dic</text>
<rect x="925" y="564" width="1" height="16" fill="#000" />
<text x="928" y="576.8" font-size="11.3" fill="#000" text-anchor="start" font-weight="normal" >2015</text>
<rect x="1025" y="564" width="1" height="5" fill="#000" />
<text x="1028" y="576.8" font-size="11.3" fill="#000" text-anchor="start" font-weight="normal" >Feb</text>
<rect x="1120" y="564" width="1" height="5" fill="#000" />
<text x="1123" y="576.8" font-size="11.3" fill="#000" text-anchor="start" font-weight="normal" >Mar</text>
<rect x="1224" y="564" width="1" height="5" fill="#000" />
<text x="1227" y="576.8" font-size="11.3" fill="#000" text-anchor="start" font-weight="normal" >Abr</text>
</svg></body></html>
